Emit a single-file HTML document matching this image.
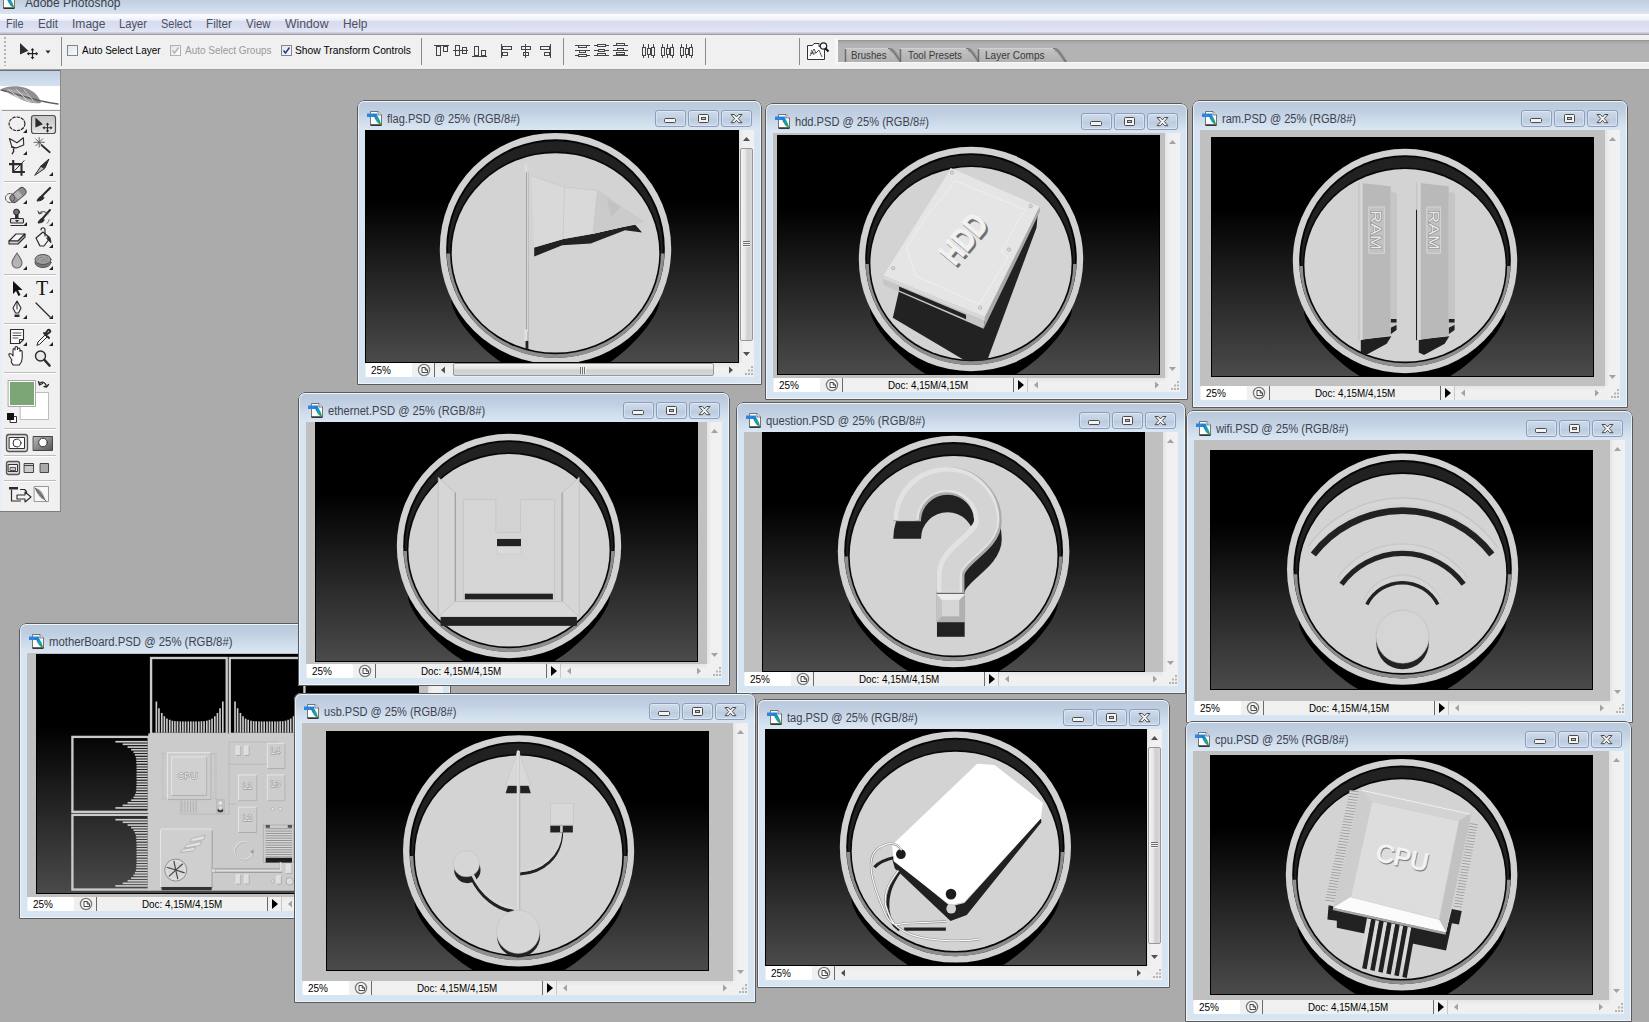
<!DOCTYPE html>
<html><head><meta charset="utf-8"><title>Adobe Photoshop</title>
<style>
*{box-sizing:border-box}
html,body{margin:0;padding:0}
body{width:1649px;height:1022px;overflow:hidden;background:#ababab;position:relative;font-family:"Liberation Sans",sans-serif}
.t{position:absolute;white-space:nowrap;transform-origin:0 50%;display:block}
.a{position:absolute}
.win{position:absolute;border-radius:7px 7px 0 0;background:#d7e4f2;overflow:hidden}
.win .bd{position:absolute;left:0;top:0;right:0;bottom:0;border:1px solid #5a5a5a;border-radius:7px 7px 0 0;box-shadow:inset 0 0 0 1px rgba(255,255,255,.6);pointer-events:none}
.win .tb{position:absolute;left:1px;top:1px;right:1px;height:29px;background:linear-gradient(#b9c9dc 0,#c0cfe1 35%,#d3e0ee 80%,#dae6f3 100%);border-radius:6px 6px 0 0;box-shadow:inset 0 1px 0 rgba(255,255,255,.5)}
.wb{position:absolute;width:31px;height:17px;border:1px solid #8d9dbd;border-radius:3px;background:linear-gradient(#cfdbea,#c0cfe2 50%,#b9c9de 51%,#cbd8e8);box-shadow:inset 0 0 0 1px rgba(255,255,255,.35)}
.ct{position:absolute;background:#c0c0c0;overflow:hidden}
.vs{position:absolute;top:0;right:0;width:15px;bottom:0;background:linear-gradient(90deg,#e4e4e4,#f0f0f0 30%,#f1f1f1)}
.sb{position:absolute;height:14px;background:#f0f0f0}
.zb{position:absolute;left:1px;top:0;width:46px;height:14px;background:#fff;border-radius:2px}
.hs{position:absolute;top:0;height:14px;background:linear-gradient(#e6e6e6,#f1f1f1 40%,#efefef)}
.sep{position:absolute;top:0;width:1px;height:14px;background:#6a6a6a}
.thumbv{position:absolute;left:1px;width:13px;border:1px solid #979797;border-radius:2px;background:linear-gradient(90deg,#f4f4f4,#e3e3e3 45%,#cfcfcf 55%,#d8d8d8)}
.thumbh{position:absolute;top:1px;height:13px;border:1px solid #979797;border-radius:2px;background:linear-gradient(#f4f4f4,#e3e3e3 45%,#cfcfcf 55%,#d8d8d8)}
</style></head>
<body>

<svg width="0" height="0" style="position:absolute">
<defs>
<linearGradient id="bg" x1="0" y1="0" x2="0" y2="1"><stop offset="0" stop-color="#000"/><stop offset=".3" stop-color="#000"/><stop offset="1" stop-color="#4b4b4b"/></linearGradient>
<linearGradient id="fe" x1="0" y1="0" x2="1" y2="1"><stop offset="0" stop-color="#1d6fd0"/><stop offset=".55" stop-color="#1aa0b8"/><stop offset="1" stop-color="#2f9a2a"/></linearGradient>
<symbol id="di" viewBox="0 0 16 16">
<path d="M3.500 1.500h7.500l3.500 3.500v10h-11z" fill="#fff" stroke="#555" stroke-width=".8"/>
<path d="M11 1.500v3.500h3.500" fill="#e8e8e8" stroke="#555" stroke-width=".7"/>
<path d="M3.500 15.200h11" stroke="#111" stroke-width="1.200"/>
<path d="M0 3.600h10.300v3.300h-10.300z" fill="#2d86dd"/>
<path d="M5.800 4.800c1.500-.8 3.500-.5 4.600 1.200c1.600 2.300 3 5.200 3.600 8.400c-2.300-.2-4.200-2-5.400-4.600c-.9-1.900-1.600-3.500-2.800-5z" fill="url(#fe)"/>
</symbol>
<symbol id="bmin" viewBox="0 0 31 17"><rect x="9.500" y="8.500" width="11" height="4" rx="1" fill="#f4f4f4" stroke="#4a4a4a"/></symbol>
<symbol id="bmax" viewBox="0 0 31 17"><rect x="10.500" y="4.500" width="10" height="8" rx="1" fill="#f4f4f4" stroke="#4a4a4a"/><rect x="13.500" y="7.500" width="4" height="2" fill="#b8c7dc" stroke="#4a4a4a"/></symbol>
<symbol id="bcls" viewBox="0 0 31 17"><path d="M10 4.500h3.400l2.100 2.400l2.100-2.400h3.400l-3.700 4.100l3.700 4.100h-3.400l-2.100-2.400l-2.100 2.400h-3.400l3.700-4.100z" fill="#f6f6f6" stroke="#4a4a4a" stroke-width="1" stroke-linejoin="round"/></symbol>
<symbol id="clk" viewBox="0 0 14 14"><circle cx="7" cy="7" r="5.600" fill="#f4f4f4" stroke="#7a7a7a" stroke-width="1.300"/><path d="M5 4.500h3.200l2.300 2.600v2.400h-5.500z" fill="#fff" stroke="#333" stroke-width=".9"/><path d="M8.200 4.500v2.600h2.300" fill="none" stroke="#333" stroke-width=".9"/></symbol>
</defs></svg>

<div class="a" style="left:0;top:0;width:1649px;height:14px;background:linear-gradient(#bfcee1,#cedaea 60%,#dde6f2)"></div><svg class="a" style="left:0;top:-7px" width="16" height="16"><use href="#di"/></svg><span class="t" style="left:25px;top:-4px;font-size:12px;line-height:14px;color:#3a3f4a;transform:scaleX(1.0009);">Adobe Photoshop</span><div class="a" style="left:0;top:14px;width:1649px;height:20px;background:linear-gradient(#fdfdff 0,#f6f7fc 18%,#eceef9 31%,#d8dcef 37%,#dadef1 60%,#e1e5f5 91%,#b6b8c9 94%,#b6b8c9 97%,#f2f2f4 100%)"></div><div class="a" style="left:0;top:34px;width:1649px;height:1px;background:#9d9d9d"></div><span class="t" style="left:6px;top:16.5px;font-size:12px;line-height:14px;color:#4c5160;transform:scaleX(0.9051);">File</span><span class="t" style="left:38px;top:16.5px;font-size:12px;line-height:14px;color:#4c5160;transform:scaleX(0.9672);">Edit</span><span class="t" style="left:71.5px;top:16.5px;font-size:12px;line-height:14px;color:#4c5160;transform:scaleX(1.0045);">Image</span><span class="t" style="left:119px;top:16.5px;font-size:12px;line-height:14px;color:#4c5160;transform:scaleX(0.9328);">Layer</span><span class="t" style="left:161px;top:16.5px;font-size:12px;line-height:14px;color:#4c5160;transform:scaleX(0.9145);">Select</span><span class="t" style="left:206px;top:16.5px;font-size:12px;line-height:14px;color:#4c5160;transform:scaleX(0.9750);">Filter</span><span class="t" style="left:246px;top:16.5px;font-size:12px;line-height:14px;color:#4c5160;transform:scaleX(0.9499);">View</span><span class="t" style="left:285px;top:16.5px;font-size:12px;line-height:14px;color:#4c5160;transform:scaleX(1.0192);">Window</span><span class="t" style="left:343px;top:16.5px;font-size:12px;line-height:14px;color:#4c5160;transform:scaleX(0.9927);">Help</span><div class="a" style="left:0;top:35px;width:1649px;height:34px;background:#f0f0f0"></div><div class="a" style="left:0;top:69px;width:1649px;height:1px;background:#a0a0a0"></div><div class="a" style="left:4px;top:37px;width:2px;height:29px;background:repeating-linear-gradient(#b5b5b5 0 2px,#f0f0f0 2px 4px)"></div><svg class="a" style="left:18px;top:41px" width="36" height="20" viewBox="0 0 36 20"><path d="M2 2v11.500l8.300-3.700z" fill="#2e2e2e"/><path d="M14.500 8.500v8.500M10 12.700h9" stroke="#222" stroke-width="1.200"/><path d="M14.500 7l-1.900 2.300h3.800zM14.500 18.400l-1.900-2.300h3.800zM8.800 12.700l2.300-1.900v3.800zM20.200 12.700l-2.300-1.900v3.800z" fill="#222"/><path d="M27.500 9.500h5l-2.500 3z" fill="#222"/></svg><div class="a" style="left:61px;top:37px;width:1px;height:29px;background:#8a8a8a"></div><div class="a" style="left:67px;top:45px;width:11px;height:11px;border:1px solid #7c8794;background:linear-gradient(135deg,#e2e4e8,#fbfbfb)"></div><span class="t" style="left:81.5px;top:44px;font-size:11px;line-height:13px;color:#000;transform:scaleX(0.9041);">Auto Select Layer</span><div class="a" style="left:170px;top:45px;width:11px;height:11px;border:1px solid #b0b0b0;background:linear-gradient(135deg,#e2e4e8,#fbfbfb)"></div><svg class="a" style="left:170px;top:45px" width="11" height="11"><path d="M2.500 5.500l2 2.500l4-5.500" fill="none" stroke="#b4b4b4" stroke-width="1.500"/></svg><span class="t" style="left:184.5px;top:44px;font-size:11px;line-height:13px;color:#9a9a9a;transform:scaleX(0.9068);">Auto Select Groups</span><div class="a" style="left:281px;top:45px;width:11px;height:11px;border:1px solid #7c8794;background:linear-gradient(135deg,#e2e4e8,#fbfbfb)"></div><svg class="a" style="left:281px;top:45px" width="11" height="11"><path d="M2.500 5.500l2 2.500l4-5.500" fill="none" stroke="#2a3a8a" stroke-width="1.500"/></svg><span class="t" style="left:295px;top:44px;font-size:11px;line-height:13px;color:#000;transform:scaleX(0.9347);">Show Transform Controls</span><div class="a" style="left:421px;top:38px;width:1px;height:27px;background:#8a8a8a"></div><div class="a" style="left:563px;top:38px;width:1px;height:27px;background:#8a8a8a"></div><div class="a" style="left:705px;top:38px;width:1px;height:27px;background:#8a8a8a"></div><svg class="a" style="left:430px;top:42px" width="270" height="18" viewBox="430 42 270 18" fill="none" stroke="#444" stroke-width="1"><path d="M434 45.500h15" /><rect x="436.5" y="46.500" width="4" height="9"/><rect x="443.5" y="46.500" width="4" height="5"/><path d="M453 50.500h15" /><rect x="455.5" y="45.500" width="4" height="10"/><rect x="462.5" y="47.500" width="4" height="6"/><path d="M472 56.500h15" /><rect x="474.5" y="46.500" width="4" height="9"/><rect x="481.5" y="50.500" width="4" height="5"/><path d="M501.5 44v14" /><rect x="502.5" y="46.500" width="9" height="3"/><rect x="502.5" y="52.500" width="5" height="3"/><path d="M525.5 44v14" /><rect x="521.5" y="46.500" width="9" height="3"/><rect x="523.5" y="52.500" width="5" height="3"/><path d="M550.5 44v14" /><rect x="540.5" y="46.500" width="9" height="3"/><rect x="544.5" y="52.500" width="5" height="3"/><path d="M575 45.5h15M575 50.5h15M575 55.5h15"/><rect x="578.5" y="45.5" width="8" height="2" fill="#f0f0f0"/><rect x="579.5" y="50.5" width="6" height="2" fill="#f0f0f0"/><rect x="578.5" y="54.5" width="8" height="2" fill="#f0f0f0"/><path d="M594 45.5h15M594 50.5h15M594 55.5h15"/><rect x="597.5" y="44.5" width="8" height="2" fill="#f0f0f0"/><rect x="598.5" y="49.5" width="6" height="2" fill="#f0f0f0"/><rect x="597.5" y="53.5" width="8" height="2" fill="#f0f0f0"/><path d="M613 45.5h15M613 50.5h15M613 55.5h15"/><rect x="616.5" y="43.5" width="8" height="2" fill="#f0f0f0"/><rect x="617.5" y="48.5" width="6" height="2" fill="#f0f0f0"/><rect x="616.5" y="52.5" width="8" height="2" fill="#f0f0f0"/><path d="M643.5 44v14M648.5 44v14M653.5 44v14"/><rect x="642.5" y="47.500" width="3" height="8" fill="#f0f0f0"/><rect x="647.5" y="48.500" width="3" height="6" fill="#f0f0f0"/><rect x="651.5" y="47.500" width="3" height="8" fill="#f0f0f0"/><path d="M662.5 44v14M667.5 44v14M672.5 44v14"/><rect x="661.5" y="47.500" width="3" height="8" fill="#f0f0f0"/><rect x="666.5" y="48.500" width="3" height="6" fill="#f0f0f0"/><rect x="670.5" y="47.500" width="3" height="8" fill="#f0f0f0"/><path d="M681.5 44v14M686.5 44v14M691.5 44v14"/><rect x="680.5" y="47.500" width="3" height="8" fill="#f0f0f0"/><rect x="685.5" y="48.500" width="3" height="6" fill="#f0f0f0"/><rect x="689.5" y="47.500" width="3" height="8" fill="#f0f0f0"/></svg><div class="a" style="left:799px;top:38px;width:1px;height:27px;background:#8a8a8a"></div><svg class="a" style="left:806px;top:41px" width="24" height="20" viewBox="0 0 24 20"><path d="M1.500 4.500h5l1.500-2h5v3h5.500v13h-17z" fill="#fbfbfb" stroke="#333"/><path d="M4 15l4-7l2 4l3-3l3 7M5 9l3 5M4 12h6" stroke="#444" fill="none" stroke-width=".9"/><circle cx="17.500" cy="5" r="3.200" fill="#f7f7f7" stroke="#222" stroke-width="1.200"/><path d="M19.500 7.500l3 3" stroke="#111" stroke-width="2"/></svg><div class="a" style="left:833px;top:38px;width:5px;height:27px;background:linear-gradient(90deg,#f0f0f0,#fafafa)"></div><div class="a" style="left:838px;top:40px;width:811px;height:22px;background:linear-gradient(#8f8f8f 0,#a9a9a9 8%,#b3b3b3 25%,#b3b3b3 100%)"></div><div class="a" style="left:838px;top:62px;width:811px;height:1px;background:#f8f8f8"></div><svg class="a" style="left:838px;top:40px" width="300" height="22" viewBox="838 40 300 22"><defs><linearGradient id="tg" x1="0" y1="0" x2="0" y2="1"><stop offset="0" stop-color="#c4c4c4"/><stop offset="1" stop-color="#b0b0b0"/></linearGradient></defs><path d="M845 62V48.500h43q4 0 7 5l6 8.500z" fill="url(#tg)"/><path d="M845.5 62V49" stroke="#6e6e6e" stroke-width="1.500" fill="none"/><path d="M845 48.500h43" stroke="#d0d0d0" stroke-width="1" fill="none"/><path d="M890 49.500q3 .5 6 5l5 7.500" stroke="#9a9a9a" stroke-width="3.500" fill="none"/><path d="M888 48.500q4 0 7 5l6 8.500" stroke="#6f6f6f" stroke-width="1.200" fill="none"/><path d="M900 62V48.500h66q4 0 7 5l6 8.500z" fill="url(#tg)"/><path d="M900.5 62V49" stroke="#6e6e6e" stroke-width="1.500" fill="none"/><path d="M900 48.500h66" stroke="#d0d0d0" stroke-width="1" fill="none"/><path d="M968 49.500q3 .5 6 5l5 7.500" stroke="#9a9a9a" stroke-width="3.500" fill="none"/><path d="M966 48.500q4 0 7 5l6 8.500" stroke="#6f6f6f" stroke-width="1.200" fill="none"/><path d="M978 62V48.500h75q4 0 7 5l6 8.500z" fill="url(#tg)"/><path d="M978.5 62V49" stroke="#6e6e6e" stroke-width="1.500" fill="none"/><path d="M978 48.500h75" stroke="#d0d0d0" stroke-width="1" fill="none"/><path d="M1055 49.500q3 .5 6 5l5 7.500" stroke="#9a9a9a" stroke-width="3.500" fill="none"/><path d="M1053 48.500q4 0 7 5l6 8.500" stroke="#6f6f6f" stroke-width="1.200" fill="none"/></svg><span class="t" style="left:851px;top:49px;font-size:11px;line-height:13px;color:#3a3a3a;transform:scaleX(0.8797);">Brushes</span><span class="t" style="left:908px;top:49px;font-size:11px;line-height:13px;color:#3a3a3a;transform:scaleX(0.8922);">Tool Presets</span><span class="t" style="left:985px;top:49px;font-size:11px;line-height:13px;color:#3a3a3a;transform:scaleX(0.9096);">Layer Comps</span>
<div class="a" style="left:0;top:70px;width:61px;height:442px;background:#f0f0f0;border-right:1px solid #8a8a8a;border-bottom:1px solid #7d7d7d;border-top:1px solid #6f6f6f"></div><div class="a" style="left:0;top:71px;width:60px;height:15px;background:linear-gradient(#bfd0e4,#d4e1f0)"></div><div class="a" style="left:0;top:86px;width:60px;height:23px;background:#fff"></div><div class="a" style="left:0;top:110px;width:60px;height:1px;background:#9c9c9c"></div><div class="a" style="left:0;top:110px;width:2px;height:401px;background:#e8eef6"></div><div class="a" style="left:59px;top:111px;width:1px;height:400px;background:#dfe8f3"></div><svg class="a" style="left:0;top:70px" width="61" height="441" viewBox="0 70 61 441" fill="none" stroke-linecap="round" stroke-linejoin="round"><path d="M1 89c6-3 16-4 25-1c8 3 13 8 15 15c-7 1-15-1-23-5c-8-4-14-7-17-9z" fill="#8f8f8f" stroke="none"/><path d="M6 89c7 0 15 2 21 6c5 3 8 6 10 8c-7 0-14-2-20-6c-5-3-9-6-11-8z" fill="#a9a9a9" stroke="none"/><path d="M1 90c14 3 32 11 57 14" stroke="#5e5e5e" stroke-width="1.400"/><path d="M9 90l9 7M16 89l10 10M24 90l9 10M12 95l-5-3M20 99l-6-4M30 102l-5-3" stroke="#d4d4d4" stroke-width=".9"/><path d="M4 181.5h52" stroke="#bdbdbd" stroke-width="1" stroke-linecap="butt"/><path d="M4 182.5h52" stroke="#fff" stroke-width="1" stroke-linecap="butt"/><path d="M4 274.5h52" stroke="#bdbdbd" stroke-width="1" stroke-linecap="butt"/><path d="M4 275.5h52" stroke="#fff" stroke-width="1" stroke-linecap="butt"/><path d="M4 323.5h52" stroke="#bdbdbd" stroke-width="1" stroke-linecap="butt"/><path d="M4 324.5h52" stroke="#fff" stroke-width="1" stroke-linecap="butt"/><path d="M4 372.5h52" stroke="#bdbdbd" stroke-width="1" stroke-linecap="butt"/><path d="M4 373.5h52" stroke="#fff" stroke-width="1" stroke-linecap="butt"/><path d="M4 428.5h52" stroke="#bdbdbd" stroke-width="1" stroke-linecap="butt"/><path d="M4 429.5h52" stroke="#fff" stroke-width="1" stroke-linecap="butt"/><path d="M4 455.5h52" stroke="#bdbdbd" stroke-width="1" stroke-linecap="butt"/><path d="M4 456.5h52" stroke="#fff" stroke-width="1" stroke-linecap="butt"/><path d="M4 480.5h52" stroke="#bdbdbd" stroke-width="1" stroke-linecap="butt"/><path d="M4 481.5h52" stroke="#fff" stroke-width="1" stroke-linecap="butt"/><ellipse cx="17" cy="123.800" rx="7.900" ry="6.800" stroke="#2b2b2b" stroke-width="1.200" stroke-dasharray="2.500 1.800"/><path d="M27 129v4h-4z" fill="#222" stroke="none"/><defs><linearGradient id="mvb" x1="0" y1="0" x2="0" y2="1"><stop offset="0" stop-color="#c4c4c4"/><stop offset="1" stop-color="#e8e8e8"/></linearGradient></defs><rect x="31.500" y="115.500" width="24" height="18" rx="2.500" fill="url(#mvb)" stroke="#4f4f4f" stroke-width="1.200"/><path d="M35.400 117.400v10.200l7.500-3.400z" fill="#2b2b2b" stroke="none"/><path d="M47.500 124v7.400M43.800 127.700h7.400" stroke="#2b2b2b" stroke-width="1.100"/><path d="M47.500 122.600l-1.800 2.200h3.600zM47.500 132.800l-1.800-2.200h3.600zM42.400 127.700l2.200-1.800v3.600zM52.600 127.700l-2.200-1.800v3.600z" fill="#2b2b2b" stroke="none"/><path d="M9.400 138.500l7.600 4.200l6.400-4.900l.3 7.100l-7.500 3l-4.200-.7z" stroke="#2b2b2b" stroke-width="1.100"/><path d="M11.800 147.200c2-1 3 1 1.500 2.500l.5 1.500l-1.500 2.500" stroke="#2b2b2b" stroke-width="1.300"/><path d="M27 151v4h-4z" fill="#222" stroke="none"/><path d="M41.500 145l8.200 7.200" stroke="#2b2b2b" stroke-width="1.800"/><path d="M39.200 137.500v9.600M34 142.300h10.400M35.800 138.900l6.800 6.800M42.600 138.900l-6.800 6.800" stroke="#555" stroke-width=".9"/><path d="M13.200 160v12h11.700M9 164.100h12.500v11.700" stroke="#2b2b2b" stroke-width="2.100" stroke-linecap="butt" stroke-linejoin="miter"/><path d="M14.700 170.500l9.400-9.800" stroke="#2b2b2b" stroke-width="1"/><path d="M35 175l6-9l3 2.500z" fill="#bbb" stroke="#2b2b2b" stroke-width="1"/><path d="M41 166l8-7l-4 9z" fill="#2b2b2b" stroke="#2b2b2b" stroke-width="1"/><path d="M53 172v4h-4z" fill="#222" stroke="none"/><g transform="rotate(-40 18 195)"><rect x="9" y="191" width="18" height="8" rx="3.500" fill="#8c8c8c" stroke="#555" stroke-width="1"/><rect x="15" y="191.500" width="6" height="7" fill="#b5b5b5" stroke="none"/></g><circle cx="10" cy="198" r="4.500" stroke="#444" stroke-width="1" stroke-dasharray="1.200 1.200"/><path d="M27 200v4h-4z" fill="#222" stroke="none"/><path d="M50 188l-8 8" stroke="#2b2b2b" stroke-width="2.200"/><path d="M42 196c-2 0-4 2-5 5c3 0 6-1 7-3z" fill="#2b2b2b" stroke="#2b2b2b" stroke-width="1"/><path d="M53 200v4h-4z" fill="#222" stroke="none"/><circle cx="16.500" cy="212" r="2.900" fill="#6f6f6f" stroke="#2b2b2b" stroke-width="1"/><path d="M16 215h2v3h-2z" fill="#2b2b2b" stroke="#2b2b2b"/><rect x="10.500" y="218.500" width="13" height="4.500" rx="1" fill="#ddd" stroke="#2b2b2b" stroke-width="1.100"/><path d="M11 225.500h12" stroke="#2b2b2b" stroke-width="1.200"/><path d="M15 220h4l-2 2.500z" fill="#2b2b2b" stroke="none"/><path d="M27 222v4h-4z" fill="#222" stroke="none"/><path d="M50 210l-7 8" stroke="#2b2b2b" stroke-width="2"/><path d="M43 218c-2 0-4 2-5 5c3 0 6-1 6-3z" fill="#2b2b2b" stroke="#2b2b2b"/><path d="M39 213a6 6 0 0 1 9 1" stroke="#444" stroke-width="1"/><path d="M49 220a6 6 0 0 1-3 4" stroke="#444" stroke-width="1" stroke-dasharray="1 1.500"/><path d="M38 211l1 3l3-1" stroke="#444" stroke-width="1"/><path d="M53 222v4h-4z" fill="#222" stroke="none"/><path d="M9 241l7-7h9l-7 7z" fill="#f6f6f6" stroke="#2b2b2b" stroke-width="1.100"/><path d="M9 241v3h9l7-7v-3l-7 7z" fill="#cfcfcf" stroke="#2b2b2b" stroke-width="1.100"/><path d="M27 244v4h-4z" fill="#222" stroke="none"/><path d="M36 238l7-6l7 6l-6 8h-4z" fill="#f3f3f3" stroke="#2b2b2b" stroke-width="1.200"/><path d="M41 230c0-3 4-3 4 0v6" stroke="#2b2b2b" stroke-width="1.100"/><path d="M48 236c2 1 3 4 3 7c-2-2-3-3-4-4z" fill="#2b2b2b" stroke="#2b2b2b" stroke-width=".8"/><path d="M53 244v4h-4z" fill="#222" stroke="none"/><path d="M17 253c3 5 5 7 5 10a5 5 0 0 1-10 0c0-3 2-5 5-10z" fill="#b4b4b4" stroke="#6a6a6a" stroke-width="1.100"/><path d="M27 266v4h-4z" fill="#222" stroke="none"/><ellipse cx="43" cy="262.500" rx="8" ry="5" fill="#777" stroke="#555" stroke-width="1"/><ellipse cx="43" cy="259.500" rx="8" ry="5" fill="#9e9e9e" stroke="#555" stroke-width="1"/><path d="M38 259h.1M41 257.500h.1M44 259.500h.1M47 258h.1M42 261h.1M46 261h.1" stroke="#666" stroke-width="1.200"/><path d="M53 266v4h-4z" fill="#222" stroke="none"/><path d="M13 281v13l3-3l2.500 5l2-1l-2.500-5h4.500z" fill="#111" stroke="none"/><path d="M27 293v4h-4z" fill="#222" stroke="none"/><path d="M17 301l4 7l-2.500 5h-3l-2.500-5z" fill="#f6f6f6" stroke="#2b2b2b" stroke-width="1.100"/><path d="M17 302v7" stroke="#2b2b2b" stroke-width="1"/><path d="M14.500 314.500h5v2.500h-5z" fill="#2b2b2b" stroke="none"/><path d="M27 315v4h-4z" fill="#222" stroke="none"/><path d="M36 303l14 14" stroke="#2b2b2b" stroke-width="1.300"/><path d="M53 315v4h-4z" fill="#222" stroke="none"/><path d="M10.500 329.500h13v10l-4 4h-9z" fill="#fafafa" stroke="#2b2b2b" stroke-width="1.100"/><path d="M23.500 339.500h-4v4" stroke="#2b2b2b" stroke-width="1"/><path d="M13 333h8M13 335.500h8M13 338h5" stroke="#555" stroke-width="1"/><path d="M27 342v4h-4z" fill="#222" stroke="none"/><path d="M37 345l1-3l7-7l2 2l-7 7z" fill="#f4f4f4" stroke="#2b2b2b" stroke-width="1"/><path d="M44 333l5 5M45 334l3-4c1-1 3 1 2 2l-4 3" stroke="#2b2b2b" stroke-width="2"/><path d="M53 342v4h-4z" fill="#222" stroke="none"/><path d="M12 360c-2-3-4-5-3-6s3 0 4 2v-6c0-2 2-2 2 0v-2c0-2 2.500-2 2.500 0v1.500c0-2 2.500-2 2.500 0v2c0-1.500 2.200-1.500 2.200 .5v6c0 4-2 6-3 7h-6c-1-1-2-3-2-4z" fill="#fafafa" stroke="#2b2b2b" stroke-width="1.100"/><circle cx="40.500" cy="356" r="5" fill="#e8e8e8" stroke="#2b2b2b" stroke-width="1.400"/><path d="M44.500 360l5 5.500" stroke="#2b2b2b" stroke-width="2.600"/><rect x="20.500" y="392.500" width="28" height="27" fill="#fff" stroke="#bdbdbd"/><rect x="8.500" y="380.500" width="27" height="26" fill="#fff" stroke="#a8a8a8"/><rect x="10" y="382" width="24" height="23" fill="#7da677" stroke="none"/><path d="M40 383c3-2 6 0 6.500 4M38.500 381.500l1 3.500l3-1.500M46.500 387l-2.500-.5M46.500 387l2-2.500" stroke="#2b2b2b" stroke-width="1.300"/><rect x="10.500" y="416.500" width="6" height="6" fill="#fff" stroke="#333"/><rect x="7" y="413" width="7" height="7" fill="#111" stroke="none"/><rect x="6.500" y="434.500" width="21" height="17" rx="2.500" fill="#dedede" stroke="#555" stroke-width="1.300"/><rect x="9.500" y="437.500" width="15" height="11" fill="#fff" stroke="#333"/><circle cx="17" cy="443" r="4" fill="#fff" stroke="#333"/><defs><linearGradient id="qm" x1="0" y1="0" x2="1" y2="1"><stop offset="0" stop-color="#bbb"/><stop offset="1" stop-color="#555"/></linearGradient></defs><rect x="33.500" y="436.500" width="19" height="14" fill="url(#qm)" stroke="#444"/><circle cx="43" cy="442.500" r="4.300" fill="#fff" stroke="#333"/><rect x="6.500" y="461.500" width="13" height="13" rx="2" fill="#d8d8d8" stroke="#555" stroke-width="1.300"/><rect x="8.500" y="464.500" width="9" height="7" fill="#eee" stroke="#333"/><rect x="10.500" y="467.500" width="5" height="3" fill="#ccc" stroke="#333" stroke-width=".8"/><rect x="24.500" y="463.500" width="9" height="9" fill="#ccc" stroke="#444"/><path d="M24.500 465.500h9" stroke="#444"/><rect x="40.500" y="463.500" width="8" height="9" fill="#aaa" stroke="#444"/><path d="M9 487h9v2.500h-9z" fill="#2b2b2b" stroke="none"/><path d="M11.500 490v11h9" stroke="#2b2b2b" stroke-width="1.200"/><path d="M20.500 489.500h4l2 2v4" stroke="#2b2b2b" stroke-width="1.200"/><path d="M17 495h8v-3l6 5l-6 5v-3h-8z" fill="#f4f4f4" stroke="#2b2b2b" stroke-width="1.100"/><rect x="34.500" y="486.500" width="14" height="15" fill="#f7f7f7" stroke="#999"/><path d="M35 488c4 0 9 5 10 12c-4-1-8-5-10-12z" fill="#8d8d8d" stroke="none"/><path d="M35 488l11 13" stroke="#555" stroke-width="1"/></svg><span class="t" style="left:36px;top:277px;font-size:20px;line-height:22px;font-family:'Liberation Serif',serif;color:#111">T</span><svg class="a" style="left:49px;top:289px" width="6" height="6"><path d="M4 0v4h-4z" fill="#222"/></svg>
<div class="win" style="left:19px;top:623px;width:432px;height:296px"><div class="tb"></div><svg class="a" style="left:10px;top:10px" width="16" height="16"><use href="#di"/></svg><span class="t" style="left:30px;top:12px;font-size:12px;line-height:14px;color:#3d4350;transform:scaleX(0.9446);">motherBoard.PSD @ 25% (RGB/8#)</span><div class="wb" style="left:325px;top:10px"></div><svg class="a" style="left:325px;top:10px" width="31" height="17"><use href="#bmin"/></svg><div class="wb" style="left:358px;top:10px"></div><svg class="a" style="left:358px;top:10px" width="31" height="17"><use href="#bmax"/></svg><div class="wb" style="left:391px;top:10px"></div><svg class="a" style="left:391px;top:10px" width="31" height="17"><use href="#bcls"/></svg><div class="ct" style="left:8px;top:30px;width:416px;height:244px"><svg class="a" style="left:9px;top:1px" width="383" height="240" viewBox="0 0 383 240"><rect width="383" height="240" fill="url(#bg)"/><g transform="scale(0.23485)"><rect x="490" y="17" width="322" height="323" fill="none" stroke="#cbcbcb" stroke-width="10"/><rect x="825" y="17" width="318" height="323" fill="none" stroke="#cbcbcb" stroke-width="10"/><rect x="155" y="353" width="325" height="319" fill="none" stroke="#cbcbcb" stroke-width="10"/><rect x="155" y="685" width="325" height="318" fill="none" stroke="#cbcbcb" stroke-width="10"/><rect x="509" y="202" width="7" height="133" fill="#cbcbcb"/><rect x="520" y="231" width="7" height="104" fill="#cbcbcb"/><rect x="532" y="251" width="7" height="84" fill="#cbcbcb"/><rect x="543" y="265" width="7" height="70" fill="#cbcbcb"/><rect x="554" y="275" width="7" height="60" fill="#cbcbcb"/><rect x="566" y="280" width="7" height="55" fill="#cbcbcb"/><rect x="577" y="284" width="7" height="51" fill="#cbcbcb"/><rect x="588" y="286" width="7" height="49" fill="#cbcbcb"/><rect x="599" y="286" width="7" height="49" fill="#cbcbcb"/><rect x="611" y="287" width="7" height="48" fill="#cbcbcb"/><rect x="622" y="287" width="7" height="48" fill="#cbcbcb"/><rect x="633" y="287" width="7" height="48" fill="#cbcbcb"/><rect x="645" y="287" width="7" height="48" fill="#cbcbcb"/><rect x="656" y="287" width="7" height="48" fill="#cbcbcb"/><rect x="667" y="287" width="7" height="48" fill="#cbcbcb"/><rect x="678" y="287" width="7" height="48" fill="#cbcbcb"/><rect x="690" y="287" width="7" height="48" fill="#cbcbcb"/><rect x="701" y="286" width="7" height="49" fill="#cbcbcb"/><rect x="712" y="286" width="7" height="49" fill="#cbcbcb"/><rect x="724" y="284" width="7" height="51" fill="#cbcbcb"/><rect x="735" y="280" width="7" height="55" fill="#cbcbcb"/><rect x="746" y="275" width="7" height="60" fill="#cbcbcb"/><rect x="758" y="265" width="7" height="70" fill="#cbcbcb"/><rect x="769" y="251" width="7" height="84" fill="#cbcbcb"/><rect x="780" y="231" width="7" height="104" fill="#cbcbcb"/><rect x="792" y="202" width="7" height="133" fill="#cbcbcb"/><rect x="844" y="202" width="7" height="133" fill="#cbcbcb"/><rect x="855" y="231" width="7" height="104" fill="#cbcbcb"/><rect x="867" y="251" width="7" height="84" fill="#cbcbcb"/><rect x="878" y="265" width="7" height="70" fill="#cbcbcb"/><rect x="889" y="275" width="7" height="60" fill="#cbcbcb"/><rect x="900" y="280" width="7" height="55" fill="#cbcbcb"/><rect x="912" y="284" width="7" height="51" fill="#cbcbcb"/><rect x="923" y="286" width="7" height="49" fill="#cbcbcb"/><rect x="934" y="286" width="7" height="49" fill="#cbcbcb"/><rect x="946" y="287" width="7" height="48" fill="#cbcbcb"/><rect x="957" y="287" width="7" height="48" fill="#cbcbcb"/><rect x="968" y="287" width="7" height="48" fill="#cbcbcb"/><rect x="980" y="287" width="7" height="48" fill="#cbcbcb"/><rect x="991" y="287" width="7" height="48" fill="#cbcbcb"/><rect x="1002" y="287" width="7" height="48" fill="#cbcbcb"/><rect x="1014" y="287" width="7" height="48" fill="#cbcbcb"/><rect x="1025" y="287" width="7" height="48" fill="#cbcbcb"/><rect x="1036" y="286" width="7" height="49" fill="#cbcbcb"/><rect x="1047" y="286" width="7" height="49" fill="#cbcbcb"/><rect x="1059" y="284" width="7" height="51" fill="#cbcbcb"/><rect x="1070" y="280" width="7" height="55" fill="#cbcbcb"/><rect x="1081" y="275" width="7" height="60" fill="#cbcbcb"/><rect x="1093" y="265" width="7" height="70" fill="#cbcbcb"/><rect x="1104" y="251" width="7" height="84" fill="#cbcbcb"/><rect x="1115" y="231" width="7" height="104" fill="#cbcbcb"/><rect x="1126" y="202" width="7" height="133" fill="#cbcbcb"/><rect x="338" y="370" width="137" height="7" fill="#cbcbcb"/><rect x="369" y="381" width="106" height="7" fill="#cbcbcb"/><rect x="390" y="393" width="85" height="7" fill="#cbcbcb"/><rect x="405" y="404" width="70" height="7" fill="#cbcbcb"/><rect x="415" y="415" width="60" height="7" fill="#cbcbcb"/><rect x="421" y="426" width="54" height="7" fill="#cbcbcb"/><rect x="425" y="438" width="50" height="7" fill="#cbcbcb"/><rect x="427" y="449" width="48" height="7" fill="#cbcbcb"/><rect x="427" y="460" width="48" height="7" fill="#cbcbcb"/><rect x="428" y="472" width="47" height="7" fill="#cbcbcb"/><rect x="428" y="483" width="47" height="7" fill="#cbcbcb"/><rect x="428" y="494" width="47" height="7" fill="#cbcbcb"/><rect x="428" y="506" width="47" height="7" fill="#cbcbcb"/><rect x="428" y="517" width="47" height="7" fill="#cbcbcb"/><rect x="428" y="528" width="47" height="7" fill="#cbcbcb"/><rect x="428" y="540" width="47" height="7" fill="#cbcbcb"/><rect x="428" y="551" width="47" height="7" fill="#cbcbcb"/><rect x="427" y="562" width="48" height="7" fill="#cbcbcb"/><rect x="427" y="573" width="48" height="7" fill="#cbcbcb"/><rect x="425" y="585" width="50" height="7" fill="#cbcbcb"/><rect x="421" y="596" width="54" height="7" fill="#cbcbcb"/><rect x="415" y="607" width="60" height="7" fill="#cbcbcb"/><rect x="405" y="619" width="70" height="7" fill="#cbcbcb"/><rect x="390" y="630" width="85" height="7" fill="#cbcbcb"/><rect x="369" y="641" width="106" height="7" fill="#cbcbcb"/><rect x="338" y="652" width="137" height="7" fill="#cbcbcb"/><rect x="338" y="702" width="137" height="7" fill="#cbcbcb"/><rect x="369" y="713" width="106" height="7" fill="#cbcbcb"/><rect x="390" y="725" width="85" height="7" fill="#cbcbcb"/><rect x="405" y="736" width="70" height="7" fill="#cbcbcb"/><rect x="415" y="747" width="60" height="7" fill="#cbcbcb"/><rect x="421" y="758" width="54" height="7" fill="#cbcbcb"/><rect x="425" y="770" width="50" height="7" fill="#cbcbcb"/><rect x="427" y="781" width="48" height="7" fill="#cbcbcb"/><rect x="427" y="792" width="48" height="7" fill="#cbcbcb"/><rect x="428" y="804" width="47" height="7" fill="#cbcbcb"/><rect x="428" y="815" width="47" height="7" fill="#cbcbcb"/><rect x="428" y="826" width="47" height="7" fill="#cbcbcb"/><rect x="428" y="838" width="47" height="7" fill="#cbcbcb"/><rect x="428" y="849" width="47" height="7" fill="#cbcbcb"/><rect x="428" y="860" width="47" height="7" fill="#cbcbcb"/><rect x="428" y="872" width="47" height="7" fill="#cbcbcb"/><rect x="428" y="883" width="47" height="7" fill="#cbcbcb"/><rect x="427" y="894" width="48" height="7" fill="#cbcbcb"/><rect x="427" y="905" width="48" height="7" fill="#cbcbcb"/><rect x="425" y="917" width="50" height="7" fill="#cbcbcb"/><rect x="421" y="928" width="54" height="7" fill="#cbcbcb"/><rect x="415" y="939" width="60" height="7" fill="#cbcbcb"/><rect x="405" y="951" width="70" height="7" fill="#cbcbcb"/><rect x="390" y="962" width="85" height="7" fill="#cbcbcb"/><rect x="369" y="973" width="106" height="7" fill="#cbcbcb"/><rect x="338" y="984" width="137" height="7" fill="#cbcbcb"/><rect x="478" y="338" width="680" height="670" fill="#cbcbcb"/><rect x="540" y="425" width="225" height="190" fill="none" stroke="#bdbdbd" stroke-width="10" stroke-dasharray="4 5"/><rect x="560" y="420" width="185" height="200" fill="#cdcdcd" stroke="#e6e6e6" stroke-width="4"/><path d="M560 620H745V420" fill="none" stroke="#a6a6a6" stroke-width="4"/><rect x="578" y="438" width="149" height="164" fill="#d0d0d0" stroke="#e6e6e6" stroke-width="4"/><path d="M578 602H727V438" fill="none" stroke="#a6a6a6" stroke-width="4"/><g stroke="#b0b0b0" stroke-width="4"><path d="M622 625v50"/><path d="M634 625v50"/><path d="M646 625v50"/><path d="M658 625v50"/><path d="M670 625v50"/><path d="M682 625v50"/></g><path d="M615 622V682H822V375H1030M822 470H985M822 640H850" fill="none" stroke="#b5b5b5" stroke-width="3"/><rect x="985" y="380" width="75" height="108" fill="#cdcdcd" stroke="#e6e6e6" stroke-width="4"/><path d="M985 488H1060V380" fill="none" stroke="#a6a6a6" stroke-width="4"/><rect x="862" y="515" width="78" height="110" fill="#cdcdcd" stroke="#e6e6e6" stroke-width="4"/><path d="M862 625H940V515" fill="none" stroke="#a6a6a6" stroke-width="4"/><rect x="985" y="515" width="75" height="110" fill="#cdcdcd" stroke="#e6e6e6" stroke-width="4"/><path d="M985 625H1060V515" fill="none" stroke="#a6a6a6" stroke-width="4"/><rect x="862" y="652" width="78" height="108" fill="#cdcdcd" stroke="#e6e6e6" stroke-width="4"/><path d="M862 760H940V652" fill="none" stroke="#a6a6a6" stroke-width="4"/><rect x="852" y="392" width="20" height="40" fill="#dedede" stroke="#e6e6e6" stroke-width="4"/><path d="M852 432H872V392" fill="none" stroke="#a6a6a6" stroke-width="4"/><rect x="888" y="392" width="20" height="40" fill="#dedede" stroke="#e6e6e6" stroke-width="4"/><path d="M888 432H908V392" fill="none" stroke="#a6a6a6" stroke-width="4"/><rect x="852" y="940" width="20" height="40" fill="#dedede" stroke="#e6e6e6" stroke-width="4"/><path d="M852 980H872V940" fill="none" stroke="#a6a6a6" stroke-width="4"/><rect x="888" y="940" width="20" height="40" fill="#dedede" stroke="#e6e6e6" stroke-width="4"/><path d="M888 980H908V940" fill="none" stroke="#a6a6a6" stroke-width="4"/><rect x="1065" y="895" width="25" height="40" fill="#dedede" stroke="#e6e6e6" stroke-width="4"/><path d="M1065 935H1090V895" fill="none" stroke="#a6a6a6" stroke-width="4"/><rect x="1025" y="945" width="20" height="35" fill="#dedede" stroke="#e6e6e6" stroke-width="4"/><path d="M1025 980H1045V945" fill="none" stroke="#a6a6a6" stroke-width="4"/><circle cx="1008" cy="660" r="7" fill="#e4e4e4" stroke="#999" stroke-width="2"/><circle cx="1040" cy="660" r="7" fill="#e4e4e4" stroke="#999" stroke-width="2"/><circle cx="1080" cy="968" r="16" fill="#dcdcdc" stroke="#999" stroke-width="3"/><circle cx="1008" cy="968" r="7" fill="#dcdcdc" stroke="#999" stroke-width="2"/><rect x="768" y="618" width="34" height="62" fill="#c4c4c4" stroke="#b0b0b0" stroke-width="2"/><circle cx="785" cy="635" r="11" fill="#e2e2e2" stroke="#999" stroke-width="2"/><ellipse cx="785" cy="665" rx="12" ry="9" fill="#333"/><circle cx="785" cy="655" r="10" fill="#dcdcdc" stroke="#999" stroke-width="2"/><rect x="530" y="745" width="220" height="250" rx="8" fill="#cfcfcf" stroke="#e8e8e8" stroke-width="4"/><path d="M530 995H750V750" fill="none" stroke="#9c9c9c" stroke-width="5"/><rect x="535" y="992" width="213" height="14" fill="#333"/><circle cx="595" cy="920" r="47" fill="#d6d6d6" stroke="#8f8f8f" stroke-width="4"/><circle cx="595" cy="920" r="38" fill="none" stroke="#e8e8e8" stroke-width="3"/><g stroke="#444" stroke-width="5"><path d="M595 920L633 932"/><path d="M595 920L604 959"/><path d="M595 920L566 947"/><path d="M595 920L557 908"/><path d="M595 920L587 881"/><path d="M595 920L625 893"/></g><g fill="#e2e2e2" stroke="#8f8f8f" stroke-width="2"><polygon points="665,785 720,772 715,790 655,800" fill="#e2e2e2" /><polygon points="640,812 705,798 698,815 632,826" fill="#e2e2e2" /><polygon points="625,832 680,822 672,838 615,845" fill="#e2e2e2" /></g><circle cx="885" cy="838" r="38" fill="none" stroke="#e6e6e6" stroke-width="7"/><circle cx="887" cy="840" r="38" fill="none" stroke="#a0a0a0" stroke-width="3"/><circle cx="921" cy="842" r="6" fill="#999"/><rect x="968" y="728" width="130" height="160" fill="none" stroke="#b0b0b0" stroke-width="4"/><rect x="978" y="740" width="112" height="130" fill="#d8d8d8"/><g stroke="#8c8c8c" stroke-width="4"><path d="M978 744H1090"/><path d="M978 754H1090"/><path d="M978 764H1090"/><path d="M978 774H1090"/><path d="M978 784H1090"/><path d="M978 794H1090"/><path d="M978 804H1090"/><path d="M978 814H1090"/><path d="M978 824H1090"/><path d="M978 834H1090"/><path d="M978 844H1090"/><path d="M978 854H1090"/><path d="M978 864H1090"/></g><rect x="978" y="868" width="112" height="20" fill="#1c1c1c"/><rect x="978" y="728" width="18" height="12" fill="#555"/><rect x="1072" y="728" width="18" height="12" fill="#555"/><path d="M752 915H1040V885M752 930H1048" fill="none" stroke="#9e9e9e" stroke-width="5"/><path d="M752 922H1042V888" fill="none" stroke="#dedede" stroke-width="7"/><circle cx="755" cy="922" r="10" fill="#d8d8d8" stroke="#999" stroke-width="2"/></g><text x="151.5" y="125" text-anchor="middle" font-family="Liberation Sans,sans-serif" font-size="9.5" fill="#8a8a8a" stroke="#8a8a8a" stroke-width=".9">CPU</text><text x="151.5" y="125" text-anchor="middle" font-family="Liberation Sans,sans-serif" font-size="9.5" fill="#f1f1f1">CPU</text><text x="239.5" y="100" text-anchor="middle" font-family="Liberation Sans,sans-serif" font-size="8.5" fill="#8a8a8a" stroke="#8a8a8a" stroke-width=".9">L4</text><text x="239.5" y="100" text-anchor="middle" font-family="Liberation Sans,sans-serif" font-size="8.5" fill="#f1f1f1">L4</text><text x="211.5" y="135" text-anchor="middle" font-family="Liberation Sans,sans-serif" font-size="8.5" fill="#8a8a8a" stroke="#8a8a8a" stroke-width=".9">L1</text><text x="211.5" y="135" text-anchor="middle" font-family="Liberation Sans,sans-serif" font-size="8.5" fill="#f1f1f1">L1</text><text x="239.5" y="133" text-anchor="middle" font-family="Liberation Sans,sans-serif" font-size="8.5" fill="#8a8a8a" stroke="#8a8a8a" stroke-width=".9">L3</text><text x="239.5" y="133" text-anchor="middle" font-family="Liberation Sans,sans-serif" font-size="8.5" fill="#f1f1f1">L3</text><text x="211.5" y="167" text-anchor="middle" font-family="Liberation Sans,sans-serif" font-size="8.5" fill="#8a8a8a" stroke="#8a8a8a" stroke-width=".9">L2</text><text x="211.5" y="167" text-anchor="middle" font-family="Liberation Sans,sans-serif" font-size="8.5" fill="#f1f1f1">L2</text><rect x=".5" y=".5" width="382" height="239" fill="none" stroke="#000" stroke-width="1"/></svg><div class="vs"><svg class="a" style="left:0;top:0" width="15" height="244"><path d="M4.0 11.0h7l-3.5 -4z" fill="#a3a3a3"/><path d="M4.0 233.0h7l-3.5 4z" fill="#a3a3a3"/></svg></div></div><div class="sb" style="left:8px;top:274px;width:416px"><div class="zb"></div><span class="t" style="left:6px;top:1px;font-size:11px;line-height:13px;color:#000;transform:scaleX(0.9084);">25%</span><svg class="a" style="left:52px;top:0" width="14" height="14"><use href="#clk"/></svg><div class="sep" style="left:69px"></div><span class="t" style="left:114.8px;top:1px;font-size:11px;line-height:13px;color:#000;transform:scaleX(0.8935);">Doc: 4,15M/4,15M</span><div class="sep" style="left:240px"></div><svg class="a" style="left:241px;top:0" width="14" height="14"><path d="M4.0 2.0v10l6 -5.0z" fill="#000"/></svg><div class="sep" style="left:254px;background:#c8c8c8"></div><div class="hs" style="left:255px;width:146px"><svg class="a" style="left:0;top:0" width="146" height="14"><path d="M10.0 3.5v7l-4 -3.5z" fill="#a3a3a3"/><path d="M136.0 3.5v7l4 -3.5z" fill="#a3a3a3"/></svg></div><svg class="a" style="left:401px;top:0" width="15" height="14"><path d="M12 4h2M9 7.500h2M12 7.500h2M6 11h2M9 11h2M12 11h2" stroke="#b5b5b5" stroke-width="2"/></svg></div><div class="bd"></div></div>
<div class="win" style="left:357px;top:100px;width:405px;height:285px"><div class="tb"></div><svg class="a" style="left:10px;top:10px" width="16" height="16"><use href="#di"/></svg><span class="t" style="left:30px;top:12px;font-size:12px;line-height:14px;color:#3d4350;transform:scaleX(0.9221);">flag.PSD @ 25% (RGB/8#)</span><div class="wb" style="left:298px;top:10px"></div><svg class="a" style="left:298px;top:10px" width="31" height="17"><use href="#bmin"/></svg><div class="wb" style="left:331px;top:10px"></div><svg class="a" style="left:331px;top:10px" width="31" height="17"><use href="#bmax"/></svg><div class="wb" style="left:364px;top:10px"></div><svg class="a" style="left:364px;top:10px" width="31" height="17"><use href="#bcls"/></svg><div class="ct" style="left:8px;top:30px;width:389px;height:233px"><svg class="a" style="left:0px;top:0px" width="374" height="233" viewBox="0 0 374 233"><rect width="374" height="233" fill="url(#bg)"/><path d="M86.4 170.2C86.4 192.1 141.9 252.7 190.5 252.7C239.1 252.7 294.6 192.1 294.6 170.2z" fill="#000"/><circle cx="190.5" cy="118.6" r="115.7" fill="#d2d2d2"/><circle cx="190.5" cy="118.6" r="109.3" fill="#050505"/><circle cx="190.5" cy="118.6" r="107.4" fill="#212121"/><path d="M81.5 123.6A109.1 109.1 0 0 0 299.5 123.6z" fill="#8e8e8e"/><ellipse cx="190.5" cy="122.9" rx="105.4" ry="101.4" fill="#080808"/><ellipse cx="190.5" cy="122.9" rx="103.8" ry="99.7" fill="#d3d3d3"/><g transform="scale(0.22805)"><polygon points="742,515 870,478 1000,455 1130,425 1185,415 1215,450 1140,440 990,498 865,505 742,555" fill="#222" /><polygon points="730,200 875,250 1020,265 1225,405 1130,425 1000,455 870,478 742,515" fill="#d9d9d9" /><polygon points="1020,265 1225,405 1130,425 1000,455" fill="#cbcbcb" /><polygon points="1060,300 1120,340 1080,380" fill="#c2c2c2" /><path d="M875 250L868 478M1020 265L1000 455M730 200L875 250L1020 265L1225 405" stroke="#c4c4c4" stroke-width="3" fill="none"/><rect x="700" y="148" width="12" height="40" fill="#dcdcdc"/><rect x="707" y="185" width="9" height="775" fill="#8c8c8c"/><rect x="710" y="185" width="4" height="700" fill="#e6e6e6"/><rect x="699" y="875" width="14" height="50" fill="#e2e2e2"/><rect x="704" y="925" width="12" height="38" fill="#222"/></g><rect x=".5" y=".5" width="373" height="232" fill="none" stroke="#000" stroke-width="1"/></svg><div class="vs"><div class="thumbv" style="top:18px;height:193px"></div><div class="a" style="left:4px;top:111px;width:7px;height:6px;background:repeating-linear-gradient(#6f6f6f 0 1px,#f2f2f2 1px 2px)"></div><svg class="a" style="left:0;top:0" width="15" height="233"><path d="M4.0 11.0h7l-3.5 -4z" fill="#505050"/><path d="M4.0 222.0h7l-3.5 4z" fill="#505050"/></svg></div></div><div class="sb" style="left:8px;top:263px;width:389px"><div class="zb"></div><span class="t" style="left:6px;top:1px;font-size:11px;line-height:13px;color:#000;transform:scaleX(0.9084);">25%</span><svg class="a" style="left:52px;top:0" width="14" height="14"><use href="#clk"/></svg><div class="sep" style="left:69px"></div><div class="hs" style="left:70px;width:304px"><div class="thumbh" style="left:18px;width:261px;top:0"></div><div class="a" style="left:145px;top:4px;width:6px;height:7px;background:repeating-linear-gradient(90deg,#6f6f6f 0 1px,#f2f2f2 1px 2px)"></div><svg class="a" style="left:0;top:0" width="304" height="14"><path d="M10.0 3.5v7l-4 -3.5z" fill="#505050"/><path d="M294.0 3.5v7l4 -3.5z" fill="#505050"/></svg></div><svg class="a" style="left:374px;top:0" width="15" height="14"><path d="M12 4h2M9 7.500h2M12 7.500h2M6 11h2M9 11h2M12 11h2" stroke="#b5b5b5" stroke-width="2"/></svg></div><div class="bd"></div></div>
<div class="win" style="left:765px;top:103px;width:423px;height:297px"><div class="tb"></div><svg class="a" style="left:10px;top:10px" width="16" height="16"><use href="#di"/></svg><span class="t" style="left:30px;top:12px;font-size:12px;line-height:14px;color:#3d4350;transform:scaleX(0.9247);">hdd.PSD @ 25% (RGB/8#)</span><div class="wb" style="left:316px;top:10px"></div><svg class="a" style="left:316px;top:10px" width="31" height="17"><use href="#bmin"/></svg><div class="wb" style="left:349px;top:10px"></div><svg class="a" style="left:349px;top:10px" width="31" height="17"><use href="#bmax"/></svg><div class="wb" style="left:382px;top:10px"></div><svg class="a" style="left:382px;top:10px" width="31" height="17"><use href="#bcls"/></svg><div class="ct" style="left:8px;top:30px;width:407px;height:245px"><svg class="a" style="left:4px;top:2px" width="383" height="240" viewBox="0 0 383 240"><rect width="383" height="240" fill="url(#bg)"/><path d="M93.0 174.0C93.0 195.2 146.9 254.0 194 254.0C241.1 254.0 295.0 195.2 295.0 174.0z" fill="#000"/><circle cx="194" cy="124" r="112.2" fill="#d2d2d2"/><circle cx="194" cy="124" r="105.8" fill="#050505"/><circle cx="194" cy="124" r="103.9" fill="#212121"/><path d="M88.5 129A105.6 105.6 0 0 0 299.5 129z" fill="#8e8e8e"/><ellipse cx="194" cy="128.3" rx="102.2" ry="97.9" fill="#080808"/><ellipse cx="194" cy="128.3" rx="100.6" ry="96.2" fill="#d3d3d3"/><g transform="scale(0.23485)"><clipPath id="hc"><ellipse cx="830" cy="550" rx="432" ry="414"/></clipPath><g clip-path="url(#hc)"><polygon points="525,640 493,778 800,960 895,960 1105,395 1112,320 880,800" fill="#222" /></g><polygon points="740,140 452,598 455,640 470,615 752,160" fill="#b4b4b4" /><polygon points="740,140 1118,305 885,775 452,598" fill="#e5e5e5" /><polygon points="452,598 885,775 880,825 455,640" fill="#c6c6c6" /><polygon points="520,645 805,765 805,785 520,662" fill="#222" /><polygon points="452,598 885,775 884,790 452,612" fill="#d8d8d8" /><polygon points="1118,305 885,775 880,825 1120,325" fill="#a9a9a9" /><path d="M760 195L1060 320L1040 340L955 500L985 520L860 720L590 600L550 480L640 340L660 320z" fill="none" stroke="#f4f4f4" stroke-width="3"/><circle cx="745" cy="160" r="7" fill="#ddd" stroke="#9a9a9a" stroke-width="2.500"/><circle cx="1080" cy="303" r="7" fill="#ddd" stroke="#9a9a9a" stroke-width="2.500"/><circle cx="495" cy="567" r="7" fill="#ddd" stroke="#9a9a9a" stroke-width="2.500"/><circle cx="865" cy="735" r="7" fill="#ddd" stroke="#9a9a9a" stroke-width="2.500"/><circle cx="988" cy="488" r="7" fill="#ddd" stroke="#9a9a9a" stroke-width="2.500"/></g><g transform="translate(187.900,105.200) rotate(-50) scale(.76,1)"><text x="0" y="12" text-anchor="middle" font-family="Liberation Sans,sans-serif" font-weight="bold" font-size="33" fill="#6f6f6f" stroke="#6f6f6f" stroke-width="1">HDD</text></g><g transform="translate(186,103) rotate(-50) scale(.76,1)"><text x="0" y="12" text-anchor="middle" font-family="Liberation Sans,sans-serif" font-weight="bold" font-size="33" fill="#f1f1f1" stroke="#f1f1f1" stroke-width=".8">HDD</text></g><rect x=".5" y=".5" width="382" height="239" fill="none" stroke="#000" stroke-width="1"/></svg><div class="vs"><svg class="a" style="left:0;top:0" width="15" height="245"><path d="M4.0 11.0h7l-3.5 -4z" fill="#a3a3a3"/><path d="M4.0 234.0h7l-3.5 4z" fill="#a3a3a3"/></svg></div></div><div class="sb" style="left:8px;top:275px;width:407px"><div class="zb"></div><span class="t" style="left:6px;top:1px;font-size:11px;line-height:13px;color:#000;transform:scaleX(0.9084);">25%</span><svg class="a" style="left:52px;top:0" width="14" height="14"><use href="#clk"/></svg><div class="sep" style="left:69px"></div><span class="t" style="left:114.8px;top:1px;font-size:11px;line-height:13px;color:#000;transform:scaleX(0.8935);">Doc: 4,15M/4,15M</span><div class="sep" style="left:240px"></div><svg class="a" style="left:241px;top:0" width="14" height="14"><path d="M4.0 2.0v10l6 -5.0z" fill="#000"/></svg><div class="sep" style="left:254px;background:#c8c8c8"></div><div class="hs" style="left:255px;width:137px"><svg class="a" style="left:0;top:0" width="137" height="14"><path d="M10.0 3.5v7l-4 -3.5z" fill="#a3a3a3"/><path d="M127.0 3.5v7l4 -3.5z" fill="#a3a3a3"/></svg></div><svg class="a" style="left:392px;top:0" width="15" height="14"><path d="M12 4h2M9 7.500h2M12 7.500h2M6 11h2M9 11h2M12 11h2" stroke="#b5b5b5" stroke-width="2"/></svg></div><div class="bd"></div></div>
<div class="win" style="left:1192px;top:100px;width:436px;height:308px"><div class="tb"></div><svg class="a" style="left:10px;top:10px" width="16" height="16"><use href="#di"/></svg><span class="t" style="left:30px;top:12px;font-size:12px;line-height:14px;color:#3d4350;transform:scaleX(0.9206);">ram.PSD @ 25% (RGB/8#)</span><div class="wb" style="left:329px;top:10px"></div><svg class="a" style="left:329px;top:10px" width="31" height="17"><use href="#bmin"/></svg><div class="wb" style="left:362px;top:10px"></div><svg class="a" style="left:362px;top:10px" width="31" height="17"><use href="#bmax"/></svg><div class="wb" style="left:395px;top:10px"></div><svg class="a" style="left:395px;top:10px" width="31" height="17"><use href="#bcls"/></svg><div class="ct" style="left:8px;top:30px;width:420px;height:256px"><svg class="a" style="left:11px;top:7px" width="383" height="240" viewBox="0 0 383 240"><rect width="383" height="240" fill="url(#bg)"/><path d="M93.0 174.0C93.0 195.2 146.9 254.0 194 254.0C241.1 254.0 295.0 195.2 295.0 174.0z" fill="#000"/><circle cx="194" cy="124" r="112.2" fill="#d2d2d2"/><circle cx="194" cy="124" r="105.8" fill="#050505"/><circle cx="194" cy="124" r="103.9" fill="#212121"/><path d="M88.5 129A105.6 105.6 0 0 0 299.5 129z" fill="#8e8e8e"/><ellipse cx="194" cy="128.3" rx="102.2" ry="97.9" fill="#080808"/><ellipse cx="194" cy="128.3" rx="100.6" ry="96.2" fill="#d3d3d3"/><g transform="scale(0.23485)"><polygon points="638,862 768,848 748,880 660,928 638,918" fill="#1f1f1f" /><polygon points="765,232 792,238 792,820 765,840" fill="#c6c6c6" /><polygon points="765,775 790,775 790,790 765,790" fill="#222" /><polygon points="765,812 790,800 790,822 765,840" fill="#222" /><polygon points="630,195 765,210 765,845 630,865" fill="#b9b9b9" /><polygon points="630,195 648,197 648,862 630,865" fill="#d6d6d6" /><path d="M630 195V865M648 197V862" stroke="#aeaeae" stroke-width="2.5" fill="none"/><rect x="672" y="298" width="66" height="197" fill="#c2c2c2" stroke="#dedede" stroke-width="3"/><polygon points="885,862 1015,848 995,880 907,928 885,918" fill="#1f1f1f" /><polygon points="1012,232 1039,238 1039,820 1012,840" fill="#c6c6c6" /><polygon points="1012,775 1037,775 1037,790 1012,790" fill="#222" /><polygon points="1012,812 1037,800 1037,822 1012,840" fill="#222" /><polygon points="877,195 1012,210 1012,845 877,865" fill="#b9b9b9" /><polygon points="877,195 895,197 895,862 877,865" fill="#d6d6d6" /><path d="M877 195V865M895 197V862" stroke="#aeaeae" stroke-width="2.5" fill="none"/><rect x="919" y="298" width="58" height="197" fill="#c2c2c2" stroke="#dedede" stroke-width="3"/><rect x="873" y="310" width="4" height="555" fill="#151515"/></g><g transform="translate(160.3,93) rotate(90) scale(1.22,1)"><text text-anchor="middle" font-family="Liberation Sans,sans-serif" font-size="14.500" fill="#8c8c8c" stroke="#8c8c8c" stroke-width="1.100">RAM</text><text text-anchor="middle" font-family="Liberation Sans,sans-serif" font-size="14.500" fill="#e9e9e9">RAM</text></g><g transform="translate(217.8,93) rotate(90) scale(1.22,1)"><text text-anchor="middle" font-family="Liberation Sans,sans-serif" font-size="14.500" fill="#8c8c8c" stroke="#8c8c8c" stroke-width="1.100">RAM</text><text text-anchor="middle" font-family="Liberation Sans,sans-serif" font-size="14.500" fill="#e9e9e9">RAM</text></g><rect x=".5" y=".5" width="382" height="239" fill="none" stroke="#000" stroke-width="1"/></svg><div class="vs"><svg class="a" style="left:0;top:0" width="15" height="256"><path d="M4.0 11.0h7l-3.5 -4z" fill="#a3a3a3"/><path d="M4.0 245.0h7l-3.5 4z" fill="#a3a3a3"/></svg></div></div><div class="sb" style="left:8px;top:286px;width:420px"><div class="zb"></div><span class="t" style="left:6px;top:1px;font-size:11px;line-height:13px;color:#000;transform:scaleX(0.9084);">25%</span><svg class="a" style="left:52px;top:0" width="14" height="14"><use href="#clk"/></svg><div class="sep" style="left:69px"></div><span class="t" style="left:114.8px;top:1px;font-size:11px;line-height:13px;color:#000;transform:scaleX(0.8935);">Doc: 4,15M/4,15M</span><div class="sep" style="left:240px"></div><svg class="a" style="left:241px;top:0" width="14" height="14"><path d="M4.0 2.0v10l6 -5.0z" fill="#000"/></svg><div class="sep" style="left:254px;background:#c8c8c8"></div><div class="hs" style="left:255px;width:150px"><svg class="a" style="left:0;top:0" width="150" height="14"><path d="M10.0 3.5v7l-4 -3.5z" fill="#a3a3a3"/><path d="M140.0 3.5v7l4 -3.5z" fill="#a3a3a3"/></svg></div><svg class="a" style="left:405px;top:0" width="15" height="14"><path d="M12 4h2M9 7.500h2M12 7.500h2M6 11h2M9 11h2M12 11h2" stroke="#b5b5b5" stroke-width="2"/></svg></div><div class="bd"></div></div>
<div class="win" style="left:298px;top:392px;width:432px;height:294px"><div class="tb"></div><svg class="a" style="left:10px;top:10px" width="16" height="16"><use href="#di"/></svg><span class="t" style="left:30px;top:12px;font-size:12px;line-height:14px;color:#3d4350;transform:scaleX(0.9306);">ethernet.PSD @ 25% (RGB/8#)</span><div class="wb" style="left:325px;top:10px"></div><svg class="a" style="left:325px;top:10px" width="31" height="17"><use href="#bmin"/></svg><div class="wb" style="left:358px;top:10px"></div><svg class="a" style="left:358px;top:10px" width="31" height="17"><use href="#bmax"/></svg><div class="wb" style="left:391px;top:10px"></div><svg class="a" style="left:391px;top:10px" width="31" height="17"><use href="#bcls"/></svg><div class="ct" style="left:8px;top:30px;width:416px;height:242px"><svg class="a" style="left:9px;top:0px" width="383" height="240" viewBox="0 0 383 240"><rect width="383" height="240" fill="url(#bg)"/><path d="M93.0 174.0C93.0 195.2 146.9 254.0 194 254.0C241.1 254.0 295.0 195.2 295.0 174.0z" fill="#000"/><circle cx="194" cy="124" r="112.2" fill="#d2d2d2"/><circle cx="194" cy="124" r="105.8" fill="#050505"/><circle cx="194" cy="124" r="103.9" fill="#212121"/><path d="M88.5 129A105.6 105.6 0 0 0 299.5 129z" fill="#8e8e8e"/><ellipse cx="194" cy="128.3" rx="102.2" ry="97.9" fill="#080808"/><ellipse cx="194" cy="128.3" rx="100.6" ry="96.2" fill="#d3d3d3"/><g transform="scale(0.23485)"><polygon points="525,235 595,300 595,765 525,830" fill="#d6d6d6" /><polygon points="1125,235 1055,300 1055,765 1125,830" fill="#d6d6d6" /><polygon points="525,830 595,765 1055,765 1125,830" fill="#d9d9d9" /><path d="M525 235V830M1125 235V830M525 235L595 300M1125 235L1055 300M525 830L595 765M1125 830L1055 765M595 300V765H1055V300" stroke="#bcbcbc" stroke-width="3" fill="none"/><path d="M598 300V762M1052 300V762" stroke="#a4a4a4" stroke-width="5" fill="none"/><path d="M632 330H770V470H875V330H1020V755H632z" stroke="#c2c2c2" stroke-width="3" fill="#d5d5d5"/><rect x="775" y="498" width="102" height="32" fill="#222"/><rect x="775" y="530" width="102" height="32" fill="#dadada" stroke="#c2c2c2" stroke-width="2"/><rect x="638" y="731" width="375" height="24" fill="#222"/><rect x="535" y="830" width="580" height="38" fill="#222"/></g><rect x=".5" y=".5" width="382" height="239" fill="none" stroke="#000" stroke-width="1"/></svg><div class="vs"><svg class="a" style="left:0;top:0" width="15" height="242"><path d="M4.0 11.0h7l-3.5 -4z" fill="#a3a3a3"/><path d="M4.0 231.0h7l-3.5 4z" fill="#a3a3a3"/></svg></div></div><div class="sb" style="left:8px;top:272px;width:416px"><div class="zb"></div><span class="t" style="left:6px;top:1px;font-size:11px;line-height:13px;color:#000;transform:scaleX(0.9084);">25%</span><svg class="a" style="left:52px;top:0" width="14" height="14"><use href="#clk"/></svg><div class="sep" style="left:69px"></div><span class="t" style="left:114.8px;top:1px;font-size:11px;line-height:13px;color:#000;transform:scaleX(0.8935);">Doc: 4,15M/4,15M</span><div class="sep" style="left:240px"></div><svg class="a" style="left:241px;top:0" width="14" height="14"><path d="M4.0 2.0v10l6 -5.0z" fill="#000"/></svg><div class="sep" style="left:254px;background:#c8c8c8"></div><div class="hs" style="left:255px;width:146px"><svg class="a" style="left:0;top:0" width="146" height="14"><path d="M10.0 3.5v7l-4 -3.5z" fill="#a3a3a3"/><path d="M136.0 3.5v7l4 -3.5z" fill="#a3a3a3"/></svg></div><svg class="a" style="left:401px;top:0" width="15" height="14"><path d="M12 4h2M9 7.500h2M12 7.500h2M6 11h2M9 11h2M12 11h2" stroke="#b5b5b5" stroke-width="2"/></svg></div><div class="bd"></div></div>
<div class="win" style="left:736px;top:402px;width:450px;height:292px"><div class="tb"></div><svg class="a" style="left:10px;top:10px" width="16" height="16"><use href="#di"/></svg><span class="t" style="left:30px;top:12px;font-size:12px;line-height:14px;color:#3d4350;transform:scaleX(0.9351);">question.PSD @ 25% (RGB/8#)</span><div class="wb" style="left:343px;top:10px"></div><svg class="a" style="left:343px;top:10px" width="31" height="17"><use href="#bmin"/></svg><div class="wb" style="left:376px;top:10px"></div><svg class="a" style="left:376px;top:10px" width="31" height="17"><use href="#bmax"/></svg><div class="wb" style="left:409px;top:10px"></div><svg class="a" style="left:409px;top:10px" width="31" height="17"><use href="#bcls"/></svg><div class="ct" style="left:8px;top:30px;width:434px;height:240px"><svg class="a" style="left:18px;top:0px" width="383" height="240" viewBox="0 0 383 240"><rect width="383" height="240" fill="url(#bg)"/><path d="M87.4 171.1C87.4 193.0 143.0 253.7 191.6 253.7C240.2 253.7 295.8 193.0 295.8 171.1z" fill="#000"/><circle cx="191.6" cy="119.5" r="115.8" fill="#d2d2d2"/><circle cx="191.6" cy="119.5" r="109.4" fill="#050505"/><circle cx="191.6" cy="119.5" r="107.5" fill="#212121"/><path d="M82.5 124.5A109.2 109.2 0 0 0 300.7 124.5z" fill="#8e8e8e"/><ellipse cx="191.6" cy="123.8" rx="105.5" ry="101.5" fill="#080808"/><ellipse cx="191.6" cy="123.8" rx="103.9" ry="99.8" fill="#d3d3d3"/><g transform="scale(0.23485)"><path d="M618 380A172 172 0 0 1 962 380C962 470 803 520 803 610V688" transform="translate(0,75)" stroke="#212121" stroke-width="118" fill="none"/><rect x="745" y="800" width="118" height="72" fill="#212121"/><path d="M618 380A172 172 0 0 1 962 380C962 470 803 520 803 610V688" stroke="#ababab" stroke-width="118" fill="none"/><path d="M618 380A172 172 0 0 1 962 380C962 470 803 520 803 610V688" transform="translate(-5,-5)" stroke="#e2e2e2" stroke-width="108" fill="none"/><path d="M618 378A172 172 0 0 1 962 380C962 470 803 520 803 610V680" stroke="#d4d4d4" stroke-width="78" fill="none"/><rect x="742" y="690" width="123" height="120" fill="#b0b0b0"/><polygon points="742,690 865,690 840,715 765,715" fill="#ececec" /><polygon points="742,690 765,715 765,785 742,810" fill="#c4c4c4" /><rect x="765" y="715" width="75" height="70" fill="#d6d6d6"/></g><rect x=".5" y=".5" width="382" height="239" fill="none" stroke="#000" stroke-width="1"/></svg><div class="vs"><svg class="a" style="left:0;top:0" width="15" height="240"><path d="M4.0 11.0h7l-3.5 -4z" fill="#a3a3a3"/><path d="M4.0 229.0h7l-3.5 4z" fill="#a3a3a3"/></svg></div></div><div class="sb" style="left:8px;top:270px;width:434px"><div class="zb"></div><span class="t" style="left:6px;top:1px;font-size:11px;line-height:13px;color:#000;transform:scaleX(0.9084);">25%</span><svg class="a" style="left:52px;top:0" width="14" height="14"><use href="#clk"/></svg><div class="sep" style="left:69px"></div><span class="t" style="left:114.8px;top:1px;font-size:11px;line-height:13px;color:#000;transform:scaleX(0.8935);">Doc: 4,15M/4,15M</span><div class="sep" style="left:240px"></div><svg class="a" style="left:241px;top:0" width="14" height="14"><path d="M4.0 2.0v10l6 -5.0z" fill="#000"/></svg><div class="sep" style="left:254px;background:#c8c8c8"></div><div class="hs" style="left:255px;width:164px"><svg class="a" style="left:0;top:0" width="164" height="14"><path d="M10.0 3.5v7l-4 -3.5z" fill="#a3a3a3"/><path d="M154.0 3.5v7l4 -3.5z" fill="#a3a3a3"/></svg></div><svg class="a" style="left:419px;top:0" width="15" height="14"><path d="M12 4h2M9 7.500h2M12 7.500h2M6 11h2M9 11h2M12 11h2" stroke="#b5b5b5" stroke-width="2"/></svg></div><div class="bd"></div></div>
<div class="win" style="left:1186px;top:410px;width:447px;height:313px"><div class="tb"></div><svg class="a" style="left:10px;top:10px" width="16" height="16"><use href="#di"/></svg><span class="t" style="left:30px;top:12px;font-size:12px;line-height:14px;color:#3d4350;transform:scaleX(0.9317);">wifi.PSD @ 25% (RGB/8#)</span><div class="wb" style="left:340px;top:10px"></div><svg class="a" style="left:340px;top:10px" width="31" height="17"><use href="#bmin"/></svg><div class="wb" style="left:373px;top:10px"></div><svg class="a" style="left:373px;top:10px" width="31" height="17"><use href="#bmax"/></svg><div class="wb" style="left:406px;top:10px"></div><svg class="a" style="left:406px;top:10px" width="31" height="17"><use href="#bcls"/></svg><div class="ct" style="left:8px;top:30px;width:431px;height:261px"><svg class="a" style="left:16px;top:10px" width="383" height="240" viewBox="0 0 383 240"><rect width="383" height="240" fill="url(#bg)"/><path d="M88.6 170.8C88.6 192.6 144.0 253.2 192.6 253.2C241.2 253.2 296.6 192.6 296.6 170.8z" fill="#000"/><circle cx="192.6" cy="119.2" r="115.6" fill="#d2d2d2"/><circle cx="192.6" cy="119.2" r="109.2" fill="#050505"/><circle cx="192.6" cy="119.2" r="107.3" fill="#212121"/><path d="M83.7 124.2A109.0 109.0 0 0 0 301.5 124.2z" fill="#8e8e8e"/><ellipse cx="192.6" cy="123.5" rx="105.3" ry="101.3" fill="#080808"/><ellipse cx="192.6" cy="123.5" rx="103.7" ry="99.6" fill="#d3d3d3"/><g transform="scale(0.23485)"><path d="M428 418A482 482 0 0 1 1212 418" stroke-width="30" stroke="#c3c3c3" fill="none"/><path d="M430 418A482 482 0 0 1 1210 418" stroke-width="25" stroke="#d6d6d6" fill="none"/><path d="M553 548A326 326 0 0 1 1087 548" stroke-width="24" stroke="#c6c6c6" fill="none"/><path d="M555 548A326 326 0 0 1 1085 548" stroke-width="19" stroke="#d6d6d6" fill="none"/><path d="M662 640A172 172 0 0 1 976 640" stroke-width="18" stroke="#c8c8c8" fill="none"/><path d="M664 640A172 172 0 0 1 974 640" stroke-width="13" stroke="#d6d6d6" fill="none"/><path d="M440 445A480 480 0 0 1 1200 445" stroke-width="28" stroke="#222" fill="none"/><path d="M560 572A322 322 0 0 1 1080 572" stroke-width="22" stroke="#222" fill="none"/><path d="M668 658A169 169 0 0 1 970 658" stroke-width="15" stroke="#222" fill="none"/><circle cx="820" cy="822" r="112" fill="#222"/><circle cx="820" cy="795" r="113" fill="#d5d5d5" stroke="#b5b5b5" stroke-width="2"/></g><rect x=".5" y=".5" width="382" height="239" fill="none" stroke="#000" stroke-width="1"/></svg><div class="vs"><svg class="a" style="left:0;top:0" width="15" height="261"><path d="M4.0 11.0h7l-3.5 -4z" fill="#a3a3a3"/><path d="M4.0 250.0h7l-3.5 4z" fill="#a3a3a3"/></svg></div></div><div class="sb" style="left:8px;top:291px;width:431px"><div class="zb"></div><span class="t" style="left:6px;top:1px;font-size:11px;line-height:13px;color:#000;transform:scaleX(0.9084);">25%</span><svg class="a" style="left:52px;top:0" width="14" height="14"><use href="#clk"/></svg><div class="sep" style="left:69px"></div><span class="t" style="left:114.8px;top:1px;font-size:11px;line-height:13px;color:#000;transform:scaleX(0.8935);">Doc: 4,15M/4,15M</span><div class="sep" style="left:240px"></div><svg class="a" style="left:241px;top:0" width="14" height="14"><path d="M4.0 2.0v10l6 -5.0z" fill="#000"/></svg><div class="sep" style="left:254px;background:#c8c8c8"></div><div class="hs" style="left:255px;width:161px"><svg class="a" style="left:0;top:0" width="161" height="14"><path d="M10.0 3.5v7l-4 -3.5z" fill="#a3a3a3"/><path d="M151.0 3.5v7l4 -3.5z" fill="#a3a3a3"/></svg></div><svg class="a" style="left:416px;top:0" width="15" height="14"><path d="M12 4h2M9 7.500h2M12 7.500h2M6 11h2M9 11h2M12 11h2" stroke="#b5b5b5" stroke-width="2"/></svg></div><div class="bd"></div></div>
<div class="win" style="left:294px;top:693px;width:462px;height:310px"><div class="tb"></div><svg class="a" style="left:10px;top:10px" width="16" height="16"><use href="#di"/></svg><span class="t" style="left:30px;top:12px;font-size:12px;line-height:14px;color:#3d4350;transform:scaleX(0.9180);">usb.PSD @ 25% (RGB/8#)</span><div class="wb" style="left:355px;top:10px"></div><svg class="a" style="left:355px;top:10px" width="31" height="17"><use href="#bmin"/></svg><div class="wb" style="left:388px;top:10px"></div><svg class="a" style="left:388px;top:10px" width="31" height="17"><use href="#bmax"/></svg><div class="wb" style="left:421px;top:10px"></div><svg class="a" style="left:421px;top:10px" width="31" height="17"><use href="#bcls"/></svg><div class="ct" style="left:8px;top:30px;width:446px;height:258px"><svg class="a" style="left:24px;top:8px" width="383" height="240" viewBox="0 0 383 240"><rect width="383" height="240" fill="url(#bg)"/><path d="M88.6 171.5C88.6 193.3 144.0 253.9 192.6 253.9C241.2 253.9 296.6 193.3 296.6 171.5z" fill="#000"/><circle cx="192.6" cy="119.9" r="115.6" fill="#d2d2d2"/><circle cx="192.6" cy="119.9" r="109.2" fill="#050505"/><circle cx="192.6" cy="119.9" r="107.3" fill="#212121"/><path d="M83.7 124.9A109.0 109.0 0 0 0 301.5 124.9z" fill="#8e8e8e"/><ellipse cx="192.6" cy="124.2" rx="105.3" ry="101.3" fill="#080808"/><ellipse cx="192.6" cy="124.2" rx="103.7" ry="99.6" fill="#d3d3d3"/><g transform="scale(0.23485)"><polygon points="775,232 862,232 872,265 765,265" fill="#222" /><polygon points="818,80 765,232 872,232" fill="#d8d8d8" stroke="#c0c0c0" stroke-width="2"/><rect x="955" y="403" width="96" height="29" fill="#222"/><rect x="997" y="403" width="11" height="29" fill="#d3d3d3"/><rect x="957" y="308" width="96" height="92" fill="#d8d8d8" stroke="#bdbdbd" stroke-width="2"/><path d="M1003 432C1000 540 920 605 825 608" stroke="#222" stroke-width="14" fill="none"/><path d="M1000 432C995 530 915 592 825 596" stroke="#d6d6d6" stroke-width="12" fill="none"/><circle cx="602" cy="592" r="56" fill="#222"/><path d="M618 618C660 710 730 760 800 768" stroke="#222" stroke-width="16" fill="none"/><path d="M622 608C665 700 735 748 806 756" stroke="#d6d6d6" stroke-width="12" fill="none"/><circle cx="598" cy="565" r="56" fill="#d6d6d6" stroke="#bdbdbd" stroke-width="2"/><rect x="812" y="85" width="14" height="690" fill="#cdcdcd"/><rect x="815" y="85" width="4" height="690" fill="#ececec"/><rect x="824" y="232" width="3" height="540" fill="#b0b0b0"/><circle cx="820" cy="872" r="92" fill="#222"/><circle cx="818" cy="855" r="92" fill="#d6d6d6" stroke="#bdbdbd" stroke-width="2"/></g><rect x=".5" y=".5" width="382" height="239" fill="none" stroke="#000" stroke-width="1"/></svg><div class="vs"><svg class="a" style="left:0;top:0" width="15" height="258"><path d="M4.0 11.0h7l-3.5 -4z" fill="#a3a3a3"/><path d="M4.0 247.0h7l-3.5 4z" fill="#a3a3a3"/></svg></div></div><div class="sb" style="left:8px;top:288px;width:446px"><div class="zb"></div><span class="t" style="left:6px;top:1px;font-size:11px;line-height:13px;color:#000;transform:scaleX(0.9084);">25%</span><svg class="a" style="left:52px;top:0" width="14" height="14"><use href="#clk"/></svg><div class="sep" style="left:69px"></div><span class="t" style="left:114.8px;top:1px;font-size:11px;line-height:13px;color:#000;transform:scaleX(0.8935);">Doc: 4,15M/4,15M</span><div class="sep" style="left:240px"></div><svg class="a" style="left:241px;top:0" width="14" height="14"><path d="M4.0 2.0v10l6 -5.0z" fill="#000"/></svg><div class="sep" style="left:254px;background:#c8c8c8"></div><div class="hs" style="left:255px;width:176px"><svg class="a" style="left:0;top:0" width="176" height="14"><path d="M10.0 3.5v7l-4 -3.5z" fill="#a3a3a3"/><path d="M166.0 3.5v7l4 -3.5z" fill="#a3a3a3"/></svg></div><svg class="a" style="left:431px;top:0" width="15" height="14"><path d="M12 4h2M9 7.500h2M12 7.500h2M6 11h2M9 11h2M12 11h2" stroke="#b5b5b5" stroke-width="2"/></svg></div><div class="bd"></div></div>
<div class="win" style="left:757px;top:699px;width:413px;height:289px"><div class="tb"></div><svg class="a" style="left:10px;top:10px" width="16" height="16"><use href="#di"/></svg><span class="t" style="left:30px;top:12px;font-size:12px;line-height:14px;color:#3d4350;transform:scaleX(0.9232);">tag.PSD @ 25% (RGB/8#)</span><div class="wb" style="left:306px;top:10px"></div><svg class="a" style="left:306px;top:10px" width="31" height="17"><use href="#bmin"/></svg><div class="wb" style="left:339px;top:10px"></div><svg class="a" style="left:339px;top:10px" width="31" height="17"><use href="#bmax"/></svg><div class="wb" style="left:372px;top:10px"></div><svg class="a" style="left:372px;top:10px" width="31" height="17"><use href="#bcls"/></svg><div class="ct" style="left:8px;top:30px;width:397px;height:237px"><svg class="a" style="left:0px;top:0px" width="382" height="237" viewBox="0 0 382 237"><rect width="382" height="237" fill="url(#bg)"/><path d="M86.4 169.6C86.4 191.4 141.8 252.0 190.4 252.0C239.0 252.0 294.4 191.4 294.4 169.6z" fill="#000"/><circle cx="190.4" cy="118" r="115.6" fill="#d2d2d2"/><circle cx="190.4" cy="118" r="109.2" fill="#050505"/><circle cx="190.4" cy="118" r="107.3" fill="#212121"/><path d="M81.5 123A109.0 109.0 0 0 0 299.3 123z" fill="#8e8e8e"/><ellipse cx="190.4" cy="122.3" rx="105.3" ry="101.3" fill="#080808"/><ellipse cx="190.4" cy="122.3" rx="103.7" ry="99.6" fill="#d3d3d3"/><g transform="scale(0.23191)"><polygon points="548,560 800,765 860,750 1190,385 1192,402 870,802 800,828 560,602" fill="#212121" /><path d="M472 596C490 575 530 560 562 553M582 612C550 660 524 705 530 780C535 822 552 848 580 866M600 863H780" stroke="#212121" stroke-width="14" fill="none"/><polygon points="915,150 990,155 1198,318 1190,385 860,745 800,760 555,570 548,500" fill="#ffffff" /><circle cx="586" cy="540" r="21" fill="#1c1c1c"/><circle cx="802" cy="712" r="23" fill="#1c1c1c"/><circle cx="803" cy="775" r="21" fill="#d3d3d3"/><path d="M590 522C560 480 520 490 480 520C440 560 450 640 520 800C540 840 560 850 600 838L780 830M575 610C540 660 510 700 520 760C540 830 560 860 640 890C720 915 850 920 930 905" stroke="#8e8e8e" stroke-width="10" fill="none"/><path d="M590 522C560 480 520 490 480 520C440 560 450 640 520 800C540 840 560 850 600 838L780 830M575 610C540 660 510 700 520 760C540 830 560 860 640 890C720 915 850 920 930 905" stroke="#fafafa" stroke-width="5" fill="none"/></g><rect x=".5" y=".5" width="381" height="236" fill="none" stroke="#000" stroke-width="1"/></svg><div class="vs"><div class="thumbv" style="top:18px;height:197px"></div><div class="a" style="left:4px;top:113px;width:7px;height:6px;background:repeating-linear-gradient(#6f6f6f 0 1px,#f2f2f2 1px 2px)"></div><svg class="a" style="left:0;top:0" width="15" height="237"><path d="M4.0 11.0h7l-3.5 -4z" fill="#505050"/><path d="M4.0 226.0h7l-3.5 4z" fill="#505050"/></svg></div></div><div class="sb" style="left:8px;top:267px;width:397px"><div class="zb"></div><span class="t" style="left:6px;top:1px;font-size:11px;line-height:13px;color:#000;transform:scaleX(0.9084);">25%</span><svg class="a" style="left:52px;top:0" width="14" height="14"><use href="#clk"/></svg><div class="sep" style="left:69px"></div><div class="hs" style="left:70px;width:312px"><svg class="a" style="left:0;top:0" width="312" height="14"><path d="M10.0 3.5v7l-4 -3.5z" fill="#505050"/><path d="M302.0 3.5v7l4 -3.5z" fill="#505050"/></svg></div><svg class="a" style="left:382px;top:0" width="15" height="14"><path d="M12 4h2M9 7.500h2M12 7.500h2M6 11h2M9 11h2M12 11h2" stroke="#b5b5b5" stroke-width="2"/></svg></div><div class="bd"></div></div>
<div class="win" style="left:1185px;top:721px;width:447px;height:301px"><div class="tb"></div><svg class="a" style="left:10px;top:10px" width="16" height="16"><use href="#di"/></svg><span class="t" style="left:30px;top:12px;font-size:12px;line-height:14px;color:#3d4350;transform:scaleX(0.9249);">cpu.PSD @ 25% (RGB/8#)</span><div class="wb" style="left:340px;top:10px"></div><svg class="a" style="left:340px;top:10px" width="31" height="17"><use href="#bmin"/></svg><div class="wb" style="left:373px;top:10px"></div><svg class="a" style="left:373px;top:10px" width="31" height="17"><use href="#bmax"/></svg><div class="wb" style="left:406px;top:10px"></div><svg class="a" style="left:406px;top:10px" width="31" height="17"><use href="#bcls"/></svg><div class="ct" style="left:8px;top:30px;width:431px;height:249px"><svg class="a" style="left:17px;top:4px" width="383" height="240" viewBox="0 0 383 240"><rect width="383" height="240" fill="url(#bg)"/><path d="M87.4 171.4C87.4 193.3 143.0 254.0 191.6 254.0C240.2 254.0 295.8 193.3 295.8 171.4z" fill="#000"/><circle cx="191.6" cy="119.8" r="115.8" fill="#d2d2d2"/><circle cx="191.6" cy="119.8" r="109.4" fill="#050505"/><circle cx="191.6" cy="119.8" r="107.5" fill="#212121"/><path d="M82.5 124.8A109.2 109.2 0 0 0 300.7 124.8z" fill="#8e8e8e"/><ellipse cx="191.6" cy="124.1" rx="105.5" ry="101.5" fill="#080808"/><ellipse cx="191.6" cy="124.1" rx="103.9" ry="99.8" fill="#d3d3d3"/><g transform="scale(0.23485)"><polygon points="505,640 500,700 540,706 540,736 1005,832 1030,716 1060,722 1072,664 1030,656 1005,755" fill="#212121" /><polygon points="668.4,695.6 687.1,699.5 660.1,847.4 641.4,843.5" fill="#dbdbdb" /><polygon points="702.6,702.7 721.3000000000001,706.6 694.3000000000001,855.3 675.6,851.4" fill="#dbdbdb" /><polygon points="736.8,709.8000000000001 755.5,713.7 728.5,863.1999999999999 709.8,859.3" fill="#dbdbdb" /><polygon points="771.0,716.9 789.7,720.8 762.7,871.1 744.0,867.2" fill="#dbdbdb" /><polygon points="805.2,724.0 823.9000000000001,727.9 796.9000000000001,879.0 778.2,875.1" fill="#dbdbdb" /><polygon points="839.4,731.1 858.1,735.0 831.1,886.9 812.4,883.0" fill="#dbdbdb" /><polygon points="686.0,700.0 705.0,703.8 667.0,911.8 648.0,908.0" fill="#212121" /><polygon points="720.2,707.1 739.2,710.9 701.2,919.3 682.2,915.5" fill="#212121" /><polygon points="754.4,714.2 773.4,718.0 735.4,926.8 716.4,923.0" fill="#212121" /><polygon points="788.6,721.3 807.6,725.0999999999999 769.6,934.3 750.6,930.5" fill="#212121" /><polygon points="822.8,728.4 841.8,732.1999999999999 803.8,941.8 784.8,938.0" fill="#212121" /><polygon points="857.0,735.5 876.0,739.3 838.0,949.3 819.0,945.5" fill="#212121" /><polygon points="595,150 640,155 535,640 488,630" fill="#d8d8d8" /><g stroke="#9c9c9c" stroke-width="4"><path d="M595 152l45 6"/><path d="M592 164l45 6"/><path d="M590 176l45 6"/><path d="M587 188l45 6"/><path d="M584 200l45 6"/><path d="M582 212l45 6"/><path d="M579 224l45 6"/><path d="M576 236l45 6"/><path d="M574 248l45 6"/><path d="M571 260l45 6"/><path d="M568 272l45 6"/><path d="M566 283l45 6"/><path d="M563 295l45 6"/><path d="M560 307l45 6"/><path d="M558 319l45 6"/><path d="M555 331l45 6"/><path d="M552 343l45 6"/><path d="M550 355l45 6"/><path d="M547 367l45 6"/><path d="M544 379l45 6"/><path d="M542 391l45 6"/><path d="M539 403l45 6"/><path d="M536 415l45 6"/><path d="M533 427l45 6"/><path d="M531 439l45 6"/><path d="M528 451l45 6"/><path d="M525 463l45 6"/><path d="M523 475l45 6"/><path d="M520 487l45 6"/><path d="M517 499l45 6"/><path d="M515 510l45 6"/><path d="M512 522l45 6"/><path d="M509 534l45 6"/><path d="M507 546l45 6"/><path d="M504 558l45 6"/><path d="M501 570l45 6"/><path d="M499 582l45 6"/><path d="M496 594l45 6"/><path d="M493 606l45 6"/><path d="M491 618l45 6"/></g><polygon points="1105,290 1140,295 1070,660 1035,655" fill="#d8d8d8" /><g stroke="#9c9c9c" stroke-width="4"><path d="M1105 292l35 5"/><path d="M1103 304l35 5"/><path d="M1100 316l35 5"/><path d="M1098 328l35 5"/><path d="M1096 340l35 5"/><path d="M1093 352l35 5"/><path d="M1091 365l35 5"/><path d="M1089 377l35 5"/><path d="M1086 389l35 5"/><path d="M1084 401l35 5"/><path d="M1082 413l35 5"/><path d="M1079 425l35 5"/><path d="M1077 437l35 5"/><path d="M1075 449l35 5"/><path d="M1072 461l35 5"/><path d="M1070 474l35 5"/><path d="M1068 486l35 5"/><path d="M1065 498l35 5"/><path d="M1063 510l35 5"/><path d="M1061 522l35 5"/><path d="M1058 534l35 5"/><path d="M1056 546l35 5"/><path d="M1054 558l35 5"/><path d="M1051 570l35 5"/><path d="M1049 582l35 5"/><path d="M1047 594l35 5"/><path d="M1044 607l35 5"/><path d="M1042 619l35 5"/><path d="M1040 631l35 5"/><path d="M1037 643l35 5"/></g><polygon points="640,140 1115,245 1005,755 525,650" fill="#dedede" /><polygon points="640,140 1115,245 1060,280 690,200" fill="#d3d3d3" /><polygon points="640,140 690,200 600,605 525,650" fill="#cdcdcd" /><polygon points="1115,245 1060,280 975,700 1005,755" fill="#c2c2c2" /><polygon points="525,650 1005,755 1003,765 522,660" fill="#a6a6a6" /><polygon points="525,650 600,605 975,700 1005,755" fill="#fbfbfb" /><path d="M690 200L1060 280L975 700L600 605z" fill="#dddddd" stroke="#cacaca" stroke-width="2"/><path d="M645 150L1108 252" stroke="#f2f2f2" stroke-width="4"/></g><g transform="translate(192.500,102) rotate(12)"><text x="1" y="10" text-anchor="middle" font-family="Liberation Sans,sans-serif" font-size="25" fill="#808080" stroke="#808080" stroke-width=".9">CPU</text><text x="0" y="9" text-anchor="middle" font-family="Liberation Sans,sans-serif" font-size="25" fill="#f4f4f4" stroke="#f4f4f4" stroke-width=".9">CPU</text></g><rect x=".5" y=".5" width="382" height="239" fill="none" stroke="#000" stroke-width="1"/></svg><div class="vs"><svg class="a" style="left:0;top:0" width="15" height="249"><path d="M4.0 11.0h7l-3.5 -4z" fill="#a3a3a3"/><path d="M4.0 238.0h7l-3.5 4z" fill="#a3a3a3"/></svg></div></div><div class="sb" style="left:8px;top:279px;width:431px"><div class="zb"></div><span class="t" style="left:6px;top:1px;font-size:11px;line-height:13px;color:#000;transform:scaleX(0.9084);">25%</span><svg class="a" style="left:52px;top:0" width="14" height="14"><use href="#clk"/></svg><div class="sep" style="left:69px"></div><span class="t" style="left:114.8px;top:1px;font-size:11px;line-height:13px;color:#000;transform:scaleX(0.8935);">Doc: 4,15M/4,15M</span><div class="sep" style="left:240px"></div><svg class="a" style="left:241px;top:0" width="14" height="14"><path d="M4.0 2.0v10l6 -5.0z" fill="#000"/></svg><div class="sep" style="left:254px;background:#c8c8c8"></div><div class="hs" style="left:255px;width:161px"><svg class="a" style="left:0;top:0" width="161" height="14"><path d="M10.0 3.5v7l-4 -3.5z" fill="#a3a3a3"/><path d="M151.0 3.5v7l4 -3.5z" fill="#a3a3a3"/></svg></div><svg class="a" style="left:416px;top:0" width="15" height="14"><path d="M12 4h2M9 7.500h2M12 7.500h2M6 11h2M9 11h2M12 11h2" stroke="#b5b5b5" stroke-width="2"/></svg></div><div class="bd"></div></div>
</body></html>
